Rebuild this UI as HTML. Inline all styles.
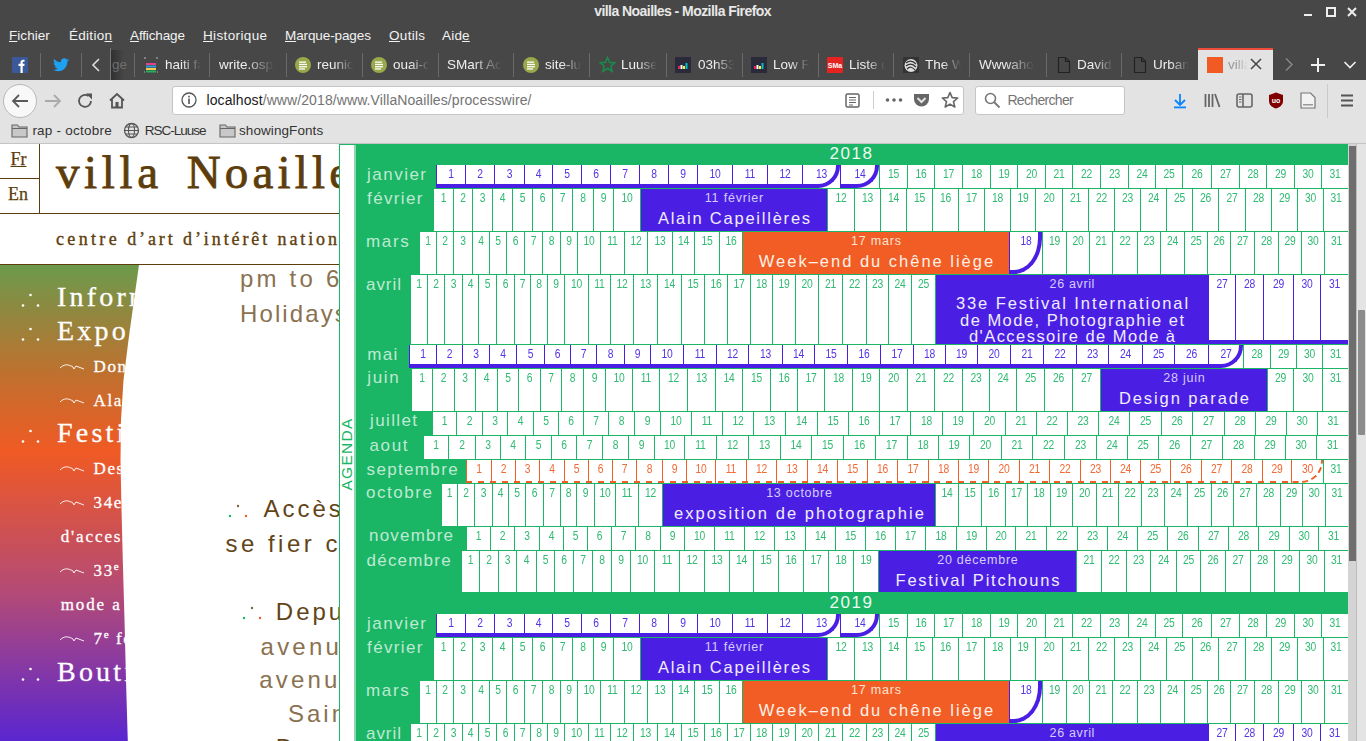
<!DOCTYPE html><html><head><meta charset="utf-8"><title>villa Noailles</title><style>html,body{margin:0;padding:0;}body{width:1366px;height:741px;overflow:hidden;position:relative;background:#fff;font-family:'Liberation Sans',sans-serif;}.t{position:absolute;white-space:nowrap;line-height:1;}.c{position:absolute;background:#fff}.n{position:absolute;text-align:center;font-size:12px;line-height:1;transform:scaleX(0.86);letter-spacing:-0.2px}</style></head><body>
<div style="position:absolute;left:0px;top:0px;width:1366px;height:80px;background:#474747;"></div>
<div class="t" style="left:594.20px;top:3.95px;font-size:14px;font-family:'Liberation Sans',sans-serif;font-weight:bold;color:#e8e8e8;letter-spacing:-0.552px;">villa Noailles - Mozilla Firefox</div>
<svg style="position:absolute;left:1300px;top:5px" width="66" height="14" viewBox="0 0 66 14"><rect x="4" y="9" width="8" height="2" fill="#eee"/><rect x="27" y="3" width="8" height="8" fill="none" stroke="#eee" stroke-width="2"/><path d="M48 3 L56 11 M56 3 L48 11" stroke="#eee" stroke-width="2"/></svg>
<div class="t" style="left:9.00px;top:28.67px;font-size:13.5px;font-family:'Liberation Sans',sans-serif;color:#f2f2f2;letter-spacing:0.049px;"><u>F</u>ichier</div>
<div class="t" style="left:69.00px;top:28.67px;font-size:13.5px;font-family:'Liberation Sans',sans-serif;color:#f2f2f2;letter-spacing:0.287px;">Éditio<u>n</u></div>
<div class="t" style="left:130.00px;top:28.67px;font-size:13.5px;font-family:'Liberation Sans',sans-serif;color:#f2f2f2;letter-spacing:-0.143px;"><u>A</u>ffichage</div>
<div class="t" style="left:203.00px;top:28.67px;font-size:13.5px;font-family:'Liberation Sans',sans-serif;color:#f2f2f2;letter-spacing:0.358px;"><u>H</u>istorique</div>
<div class="t" style="left:285.00px;top:28.67px;font-size:13.5px;font-family:'Liberation Sans',sans-serif;color:#f2f2f2;letter-spacing:-0.105px;"><u>M</u>arque-pages</div>
<div class="t" style="left:389.00px;top:28.67px;font-size:13.5px;font-family:'Liberation Sans',sans-serif;color:#f2f2f2;letter-spacing:0.318px;"><u>O</u>utils</div>
<div class="t" style="left:442.00px;top:28.67px;font-size:13.5px;font-family:'Liberation Sans',sans-serif;color:#f2f2f2;letter-spacing:0.193px;">Aid<u>e</u></div>
<div style="position:absolute;left:40px;top:53px;width:1px;height:24px;background:#6a6a6a;"></div>
<div style="position:absolute;left:81px;top:53px;width:1px;height:24px;background:#6a6a6a;"></div>
<div style="position:absolute;left:110px;top:53px;width:1px;height:24px;background:#6a6a6a;"></div>
<div style="position:absolute;left:134px;top:53px;width:1px;height:24px;background:#6a6a6a;"></div>
<div style="position:absolute;left:209px;top:53px;width:1px;height:24px;background:#6a6a6a;"></div>
<div style="position:absolute;left:286px;top:53px;width:1px;height:24px;background:#6a6a6a;"></div>
<div style="position:absolute;left:362px;top:53px;width:1px;height:24px;background:#6a6a6a;"></div>
<div style="position:absolute;left:438px;top:53px;width:1px;height:24px;background:#6a6a6a;"></div>
<div style="position:absolute;left:513px;top:53px;width:1px;height:24px;background:#6a6a6a;"></div>
<div style="position:absolute;left:589px;top:53px;width:1px;height:24px;background:#6a6a6a;"></div>
<div style="position:absolute;left:666px;top:53px;width:1px;height:24px;background:#6a6a6a;"></div>
<div style="position:absolute;left:742px;top:53px;width:1px;height:24px;background:#6a6a6a;"></div>
<div style="position:absolute;left:818px;top:53px;width:1px;height:24px;background:#6a6a6a;"></div>
<div style="position:absolute;left:893px;top:53px;width:1px;height:24px;background:#6a6a6a;"></div>
<div style="position:absolute;left:969px;top:53px;width:1px;height:24px;background:#6a6a6a;"></div>
<div style="position:absolute;left:1046px;top:53px;width:1px;height:24px;background:#6a6a6a;"></div>
<div style="position:absolute;left:1121px;top:53px;width:1px;height:24px;background:#6a6a6a;"></div>
<svg style="position:absolute;left:12px;top:57px" width="16" height="16"><rect width="16" height="16" rx="1" fill="#3b5998"/><path d="M8.5 16 V9 H6.5 V6.8 H8.5 V5.3 C8.5 3.5 9.5 2.7 11.2 2.7 H12.5 V4.8 H11.5 C10.8 4.8 10.7 5.1 10.7 5.7 V6.8 H12.6 L12.3 9 H10.7 V16 Z" fill="#fff"/></svg>
<svg style="position:absolute;left:53px;top:58px" width="16" height="14" viewBox="0 0 24 20"><path d="M24 2.4c-.9.4-1.8.6-2.8.8 1-.6 1.8-1.6 2.2-2.7-1 .6-2 1-3.1 1.2C19.4.7 18.1 0 16.6 0c-2.7 0-4.9 2.2-4.9 4.9 0 .4 0 .8.1 1.1C7.7 5.8 4.1 3.9 1.7.9c-.4.7-.7 1.6-.7 2.5 0 1.7.9 3.2 2.2 4.1-.8 0-1.6-.2-2.2-.6v.1c0 2.4 1.7 4.4 3.9 4.8-.4.1-.8.2-1.3.2-.3 0-.6 0-.9-.1.6 2 2.4 3.4 4.6 3.4-1.7 1.3-3.8 2.1-6.1 2.1-.4 0-.8 0-1.2-.1 2.2 1.4 4.8 2.2 7.5 2.2 9.1 0 14-7.5 14-14v-.6c1-.7 1.8-1.6 2.5-2.5z" fill="#1da1f2"/></svg>
<svg style="position:absolute;left:91px;top:58px" width="10" height="14"><path d="M8 1 L2 7 L8 13" fill="none" stroke="#ddd" stroke-width="1.6"/></svg>
<div style="position:absolute;left:110px;top:50px;width:14px;height:30px;background:linear-gradient(to right,rgba(0,0,0,0.35),rgba(0,0,0,0));"></div>
<div style="position:absolute;left:110px;top:48px;width:1px;height:32px;background:#777;"></div>
<div class="t" style="left:112px;top:58px;font-size:13.5px;color:#6e6e6e;">ge</div>
<svg style="position:absolute;left:143px;top:57px" width="16" height="16"><rect x="3" y="6" width="10" height="2" fill="#e83e8c"/><rect x="3" y="8.5" width="10" height="2" fill="#2d9cdb"/><rect x="3" y="11" width="10" height="2" fill="#f2c94c"/><rect x="3" y="13.5" width="10" height="2" fill="#27ae60"/><path d="M1 1h2M13 1h2M1 15h1M14 15h1" stroke="#bbb" stroke-width="1"/></svg>
<div class="t" style="left:165px;top:58px;font-size:13.5px;color:#eee;width:38px;overflow:hidden;-webkit-mask-image:linear-gradient(to right,#000 45%,transparent 95%);mask-image:linear-gradient(to right,#000 45%,transparent 95%);">haiti fa</div>
<div class="t" style="left:219px;top:58px;font-size:13.5px;color:#eee;width:58px;overflow:hidden;-webkit-mask-image:linear-gradient(to right,#000 45%,transparent 95%);mask-image:linear-gradient(to right,#000 45%,transparent 95%);">write.osp</div>
<svg style="position:absolute;left:295px;top:57px" width="16" height="16"><circle cx="8" cy="8" r="8" fill="#98a84a"/><rect x="4" y="4.5" width="7" height="1.3" fill="#fff"/><rect x="4" y="6.8" width="8" height="1.3" fill="#fff"/><rect x="4" y="9.1" width="8" height="1.3" fill="#fff"/><rect x="4" y="11.3" width="6" height="1.3" fill="#fff"/></svg>
<div class="t" style="left:317px;top:58px;font-size:13.5px;color:#eee;width:38px;overflow:hidden;-webkit-mask-image:linear-gradient(to right,#000 45%,transparent 95%);mask-image:linear-gradient(to right,#000 45%,transparent 95%);">reunion</div>
<svg style="position:absolute;left:371px;top:57px" width="16" height="16"><circle cx="8" cy="8" r="8" fill="#98a84a"/><rect x="4" y="4.5" width="7" height="1.3" fill="#fff"/><rect x="4" y="6.8" width="8" height="1.3" fill="#fff"/><rect x="4" y="9.1" width="8" height="1.3" fill="#fff"/><rect x="4" y="11.3" width="6" height="1.3" fill="#fff"/></svg>
<div class="t" style="left:393px;top:58px;font-size:13.5px;color:#eee;width:38px;overflow:hidden;-webkit-mask-image:linear-gradient(to right,#000 45%,transparent 95%);mask-image:linear-gradient(to right,#000 45%,transparent 95%);">ouai-c</div>
<div class="t" style="left:447px;top:58px;font-size:13.5px;color:#eee;width:58px;overflow:hidden;-webkit-mask-image:linear-gradient(to right,#000 45%,transparent 95%);mask-image:linear-gradient(to right,#000 45%,transparent 95%);">SMart Acc</div>
<svg style="position:absolute;left:523px;top:57px" width="16" height="16"><circle cx="8" cy="8" r="8" fill="#98a84a"/><rect x="4" y="4.5" width="7" height="1.3" fill="#fff"/><rect x="4" y="6.8" width="8" height="1.3" fill="#fff"/><rect x="4" y="9.1" width="8" height="1.3" fill="#fff"/><rect x="4" y="11.3" width="6" height="1.3" fill="#fff"/></svg>
<div class="t" style="left:545px;top:58px;font-size:13.5px;color:#eee;width:38px;overflow:hidden;-webkit-mask-image:linear-gradient(to right,#000 45%,transparent 95%);mask-image:linear-gradient(to right,#000 45%,transparent 95%);">site-lu</div>
<svg style="position:absolute;left:599px;top:56px" width="17" height="17"><path d="M8.5 1.5 L10.6 6.4 L15.8 6.8 L11.8 10.2 L13.1 15.3 L8.5 12.5 L3.9 15.3 L5.2 10.2 L1.2 6.8 L6.4 6.4 Z" fill="none" stroke="#1a8a4a" stroke-width="1.6"/></svg>
<div class="t" style="left:621px;top:58px;font-size:13.5px;color:#eee;width:38px;overflow:hidden;-webkit-mask-image:linear-gradient(to right,#000 45%,transparent 95%);mask-image:linear-gradient(to right,#000 45%,transparent 95%);">Luuse</div>
<svg style="position:absolute;left:675px;top:57px" width="16" height="16"><rect width="16" height="16" fill="#2a2a3a"/><rect x="3" y="9" width="2" height="3" fill="#e91e63"/><rect x="5.5" y="8" width="2" height="4" fill="#fff"/><rect x="8" y="9" width="2" height="3" fill="#ffeb3b"/><rect x="10.5" y="6" width="2" height="6" fill="#00bcd4"/></svg>
<svg style="position:absolute;left:751px;top:57px" width="16" height="16"><rect width="16" height="16" fill="#2a2a3a"/><rect x="3" y="9" width="2" height="3" fill="#e91e63"/><rect x="5.5" y="8" width="2" height="4" fill="#fff"/><rect x="8" y="9" width="2" height="3" fill="#ffeb3b"/><rect x="10.5" y="6" width="2" height="6" fill="#00bcd4"/></svg>
<div class="t" style="left:698px;top:58px;font-size:13.5px;color:#eee;width:38px;overflow:hidden;-webkit-mask-image:linear-gradient(to right,#000 45%,transparent 95%);mask-image:linear-gradient(to right,#000 45%,transparent 95%);">03h53</div>
<div class="t" style="left:773px;top:58px;font-size:13.5px;color:#eee;width:38px;overflow:hidden;-webkit-mask-image:linear-gradient(to right,#000 45%,transparent 95%);mask-image:linear-gradient(to right,#000 45%,transparent 95%);">Low R</div>
<svg style="position:absolute;left:827px;top:57px" width="16" height="16"><rect width="16" height="16" rx="1" fill="#e52421"/><text x="8" y="11" font-size="7" fill="#fff" text-anchor="middle" font-family="Liberation Sans" font-weight="bold">SMa</text></svg>
<div class="t" style="left:849px;top:58px;font-size:13.5px;color:#eee;width:38px;overflow:hidden;-webkit-mask-image:linear-gradient(to right,#000 45%,transparent 95%);mask-image:linear-gradient(to right,#000 45%,transparent 95%);">Liste d</div>
<svg style="position:absolute;left:903px;top:57px" width="16" height="16"><rect width="16" height="16" fill="#333"/><circle cx="8" cy="8.5" r="6.5" fill="#ddd"/><path d="M3 6 Q8 2 13 7 M3 9 Q8 5 13 10 M4 12 Q8 8 12 13" stroke="#333" stroke-width="1.2" fill="none"/></svg>
<div class="t" style="left:925px;top:58px;font-size:13.5px;color:#eee;width:38px;overflow:hidden;-webkit-mask-image:linear-gradient(to right,#000 45%,transparent 95%);mask-image:linear-gradient(to right,#000 45%,transparent 95%);">The W</div>
<div class="t" style="left:979px;top:58px;font-size:13.5px;color:#eee;width:58px;overflow:hidden;-webkit-mask-image:linear-gradient(to right,#000 45%,transparent 95%);mask-image:linear-gradient(to right,#000 45%,transparent 95%);">Wwwahoo</div>
<svg style="position:absolute;left:1057px;top:56px" width="14" height="18"><path d="M1.5 1.5 H8.5 L12.5 5.5 V16.5 H1.5 Z M8.5 1.5 V5.5 H12.5" fill="none" stroke="#222" stroke-width="1.2"/></svg>
<svg style="position:absolute;left:1133px;top:56px" width="14" height="18"><path d="M1.5 1.5 H8.5 L12.5 5.5 V16.5 H1.5 Z M8.5 1.5 V5.5 H12.5" fill="none" stroke="#222" stroke-width="1.2"/></svg>
<div class="t" style="left:1077px;top:58px;font-size:13.5px;color:#eee;width:38px;overflow:hidden;-webkit-mask-image:linear-gradient(to right,#000 45%,transparent 95%);mask-image:linear-gradient(to right,#000 45%,transparent 95%);">David</div>
<div class="t" style="left:1153px;top:58px;font-size:13.5px;color:#eee;width:38px;overflow:hidden;-webkit-mask-image:linear-gradient(to right,#000 45%,transparent 95%);mask-image:linear-gradient(to right,#000 45%,transparent 95%);">Urban</div>
<div style="position:absolute;left:1198px;top:49px;width:75px;height:31px;background:#e3e3e3;"></div>
<div style="position:absolute;left:1198px;top:48px;width:75px;height:2px;background:#f04c3c;"></div>
<div style="position:absolute;left:1207px;top:57px;width:16px;height:16px;background:#f15a22;"></div>
<div class="t" style="left:1228px;top:58px;font-size:13.5px;color:#999;width:20px;overflow:hidden;-webkit-mask-image:linear-gradient(to right,#000 40%,transparent 100%);">villa</div>
<svg style="position:absolute;left:1250px;top:58px" width="12" height="12"><path d="M1 1 L11 11 M11 1 L1 11" stroke="#444" stroke-width="1.5"/></svg>
<svg style="position:absolute;left:1284px;top:57px" width="10" height="15"><path d="M2 1.5 L8 7.5 L2 13.5" fill="none" stroke="#888" stroke-width="1.5"/></svg>
<svg style="position:absolute;left:1310px;top:57px" width="16" height="16"><path d="M8 1 V15 M1 8 H15" stroke="#f0f0f0" stroke-width="2"/></svg>
<svg style="position:absolute;left:1343px;top:60px" width="14" height="10"><path d="M1.5 2 L7 7.5 L12.5 2" fill="none" stroke="#f0f0f0" stroke-width="1.6"/></svg>
<div style="position:absolute;left:0px;top:80px;width:1366px;height:63px;background:#e3e3e3;"></div>
<div style="position:absolute;left:0px;top:143px;width:1366px;height:1px;background:#c4c4c4;"></div>
<div style="position:absolute;left:3px;top:84px;width:32px;height:32px;border-radius:50%;border:1px solid #b8b8b8;background:#f8f8f8;"></div>
<svg style="position:absolute;left:11px;top:93px" width="18" height="16"><path d="M17 8 H2 M8 2 L2 8 L8 14" fill="none" stroke="#5a5a5a" stroke-width="1.8"/></svg>
<svg style="position:absolute;left:44px;top:93px" width="18" height="16"><path d="M1 8 H16 M10 2 L16 8 L10 14" fill="none" stroke="#aaa" stroke-width="1.8"/></svg>
<svg style="position:absolute;left:77px;top:92px" width="17" height="17"><path d="M14 9 A6 6 0 1 1 11.5 4" fill="none" stroke="#555" stroke-width="1.8"/><path d="M9 1.5 H15 V7.5 Z" fill="#555"/></svg>
<svg style="position:absolute;left:108px;top:92px" width="18" height="17"><path d="M2 8.5 L9 2 L16 8.5 M4 7 V15.5 H14 V7" fill="none" stroke="#555" stroke-width="1.8"/><rect x="7.5" y="10" width="3" height="5.5" fill="#555"/></svg>
<div style="position:absolute;left:172px;top:86px;width:790px;height:27px;background:#fff;border:1px solid #c6c6c6;border-radius:3px;"></div>
<svg style="position:absolute;left:181px;top:92px" width="16" height="16"><circle cx="8" cy="8" r="7" fill="none" stroke="#555" stroke-width="1.3"/><rect x="7.2" y="6.5" width="1.6" height="5.5" fill="#555"/><rect x="7.2" y="3.8" width="1.6" height="1.6" fill="#555"/></svg>
<div class="t" style="left:206.50px;top:93.35px;font-size:14px;font-family:'Liberation Sans',sans-serif;color:#1a1a1a;letter-spacing:0.097px;">localhost<span style="color:#737373">/www/2018/www.VillaNoailles/processwire/</span></div>
<svg style="position:absolute;left:845px;top:93px" width="15" height="15"><rect x="1" y="1" width="13" height="13" rx="1.5" fill="none" stroke="#666" stroke-width="1.5"/><path d="M4 4.5H11M4 7H11M4 9.5H11M4 12H8" stroke="#666" stroke-width="1"/></svg>
<div style="position:absolute;left:873px;top:91px;width:1px;height:18px;background:#ccc;"></div>
<svg style="position:absolute;left:885px;top:97px" width="18" height="6"><circle cx="2.5" cy="3" r="1.8" fill="#666"/><circle cx="9" cy="3" r="1.8" fill="#666"/><circle cx="15.5" cy="3" r="1.8" fill="#666"/></svg>
<svg style="position:absolute;left:913px;top:92px" width="17" height="16"><path d="M1 2 H16 V7 A7.5 7.5 0 0 1 1 7 Z" fill="#666"/><path d="M4.5 6 L8.5 10 L12.5 6" fill="none" stroke="#e3e3e3" stroke-width="2"/></svg>
<svg style="position:absolute;left:941px;top:91px" width="18" height="18"><path d="M9 1.5 L11.2 6.6 L16.7 7 L12.5 10.6 L13.8 16 L9 13.1 L4.2 16 L5.5 10.6 L1.3 7 L6.8 6.6 Z" fill="none" stroke="#666" stroke-width="1.6" stroke-linejoin="round"/></svg>
<div style="position:absolute;left:975px;top:86px;width:148px;height:27px;background:#fff;border:1px solid #c6c6c6;border-radius:3px;"></div>
<svg style="position:absolute;left:984px;top:92px" width="17" height="17"><circle cx="6.5" cy="6.5" r="5" fill="none" stroke="#777" stroke-width="1.6"/><path d="M10 10 L15.5 15.5" stroke="#777" stroke-width="1.8"/></svg>
<div class="t" style="left:1007.40px;top:93.35px;font-size:14px;font-family:'Liberation Sans',sans-serif;color:#757575;letter-spacing:-0.674px;">Rechercher</div>
<svg style="position:absolute;left:1173px;top:93px" width="14" height="16"><path d="M7 1 V12 M2 7 L7 12 L12 7" fill="none" stroke="#0a84ff" stroke-width="1.8"/><rect x="1" y="13.5" width="12" height="1.8" fill="#0a84ff"/></svg>
<svg style="position:absolute;left:1204px;top:93px" width="17" height="15"><path d="M1.5 1 V14 M5 1 V14 M8.5 1 V14 M11 1 L15.5 14" stroke="#666" stroke-width="1.8"/></svg>
<svg style="position:absolute;left:1236px;top:93px" width="17" height="15"><rect x="1" y="1" width="15" height="13" rx="2" fill="none" stroke="#666" stroke-width="1.6"/><path d="M7 1 V14" stroke="#666" stroke-width="1.6"/><path d="M3 4H5.5M3 6.5H5.5M3 9H5.5" stroke="#666" stroke-width="1"/></svg>
<svg style="position:absolute;left:1268px;top:92px" width="16" height="17"><path d="M8 0.5 L15 3 V9 C15 13 11.5 15.5 8 16.5 C4.5 15.5 1 13 1 9 V3 Z" fill="#800000"/><text x="8" y="11" font-size="7" fill="#fff" text-anchor="middle" font-family="Liberation Sans" font-weight="bold">uo</text></svg>
<svg style="position:absolute;left:1300px;top:92px" width="16" height="17"><path d="M1 1 H10.5 L15 5.5 V16 H1 Z" fill="#f2f2f2" stroke="#777" stroke-width="1.2"/><rect x="3" y="12" width="10" height="1.5" fill="#999"/></svg>
<div style="position:absolute;left:1327px;top:84px;width:1px;height:34px;background:#cacaca;"></div>
<svg style="position:absolute;left:1340px;top:94px" width="14" height="13"><path d="M1 1.5H13M1 6.5H13M1 11.5H13" stroke="#555" stroke-width="1.8"/></svg>
<svg style="position:absolute;left:11px;top:123px" width="17" height="15"><path d="M1 2 H6.5 L8 4 H16 V14 H1 Z" fill="#c8c8c8" stroke="#666" stroke-width="1.1"/><path d="M1 5.5 H16" stroke="#666" stroke-width="1"/></svg>
<div class="t" style="left:32.40px;top:123.57px;font-size:13.5px;font-family:'Liberation Sans',sans-serif;color:#333;letter-spacing:0.230px;">rap - octobre</div>
<svg style="position:absolute;left:123px;top:122px" width="17" height="17"><circle cx="8.5" cy="8.5" r="7" fill="none" stroke="#555" stroke-width="1.3"/><ellipse cx="8.5" cy="8.5" rx="3" ry="7" fill="none" stroke="#555" stroke-width="1.1"/><path d="M1.5 8.5H15.5M2.5 5H14.5M2.5 12H14.5" stroke="#555" stroke-width="1"/></svg>
<div class="t" style="left:144.70px;top:123.57px;font-size:13.5px;font-family:'Liberation Sans',sans-serif;color:#333;letter-spacing:-0.998px;">RSC-Luuse</div>
<svg style="position:absolute;left:219px;top:123px" width="17" height="15"><path d="M1 2 H6.5 L8 4 H16 V14 H1 Z" fill="#c8c8c8" stroke="#666" stroke-width="1.1"/><path d="M1 5.5 H16" stroke="#666" stroke-width="1"/></svg>
<div class="t" style="left:239.00px;top:123.57px;font-size:13.5px;font-family:'Liberation Sans',sans-serif;color:#333;letter-spacing:0.082px;">showingFonts</div>
<div style="position:absolute;left:0px;top:144px;width:1348px;height:597px;background:#fff;"></div>
<div style="position:absolute;left:39px;top:144px;width:1px;height:69px;background:#5e3d0c;"></div>
<div style="position:absolute;left:0px;top:178px;width:39px;height:1px;background:#5e3d0c;"></div>
<div style="position:absolute;left:0px;top:213px;width:340px;height:1px;background:#5e3d0c;"></div>
<div style="position:absolute;left:0px;top:264px;width:340px;height:1px;background:#5e3d0c;"></div>
<div class="t" style="left:10.50px;top:150.33px;font-size:18px;font-family:'Liberation Serif',serif;color:#5e3d0c;letter-spacing:0.000px;text-decoration:underline;text-underline-offset:1px;-webkit-text-stroke:0.25px #5e3d0c;">Fr</div>
<div class="t" style="left:8.00px;top:184.53px;font-size:18px;font-family:'Liberation Serif',serif;color:#5e3d0c;letter-spacing:0.000px;-webkit-text-stroke:0.25px #5e3d0c;">En</div>
<div class="t" style="left:56.00px;top:149.44px;font-size:47px;font-family:'Liberation Serif',serif;color:#5e3d0c;letter-spacing:4.617px;-webkit-text-stroke:0.8px #5e3d0c;">villa</div>
<div class="t" style="left:186.70px;top:149.44px;font-size:47px;font-family:'Liberation Serif',serif;color:#5e3d0c;letter-spacing:4.200px;-webkit-text-stroke:0.8px #5e3d0c;">Noailles</div>
<div class="t" style="left:56.00px;top:229.83px;font-size:18px;font-family:'Liberation Serif',serif;color:#5e3d0c;letter-spacing:3.348px;-webkit-text-stroke:0.35px #5e3d0c;">centre</div>
<div class="t" style="left:127.20px;top:229.83px;font-size:18px;font-family:'Liberation Serif',serif;color:#5e3d0c;letter-spacing:2.898px;-webkit-text-stroke:0.35px #5e3d0c;">d’art d’intérêt national</div>
<div style="position:absolute;left:0;top:265px;width:340px;height:476px;overflow:hidden;clip-path:polygon(0px 0px,139px 0px,134px 35px,128.5px 75px,123.5px 115px,121px 155px,120.5px 195px,121.3px 235px,122.8px 295px,124.5px 355px,126px 415px,127.8px 476px,0px 476px);background:linear-gradient(to bottom,#6c9a4c 0px,#c0702e 110px,#f05a24 186px,#b24a78 330px,#5a26d0 476px);">
<svg style="position:absolute;left:21px;top:24.69999999999999px" width="20" height="18"><circle cx="2" cy="15.5" r="1.3" fill="#fff"/><circle cx="9.5" cy="5" r="1.3" fill="#fff"/><circle cx="17" cy="15.5" r="1.3" fill="#fff"/></svg>
<div class="t" style="left:57px;top:18.25px;font-size:28px;font-family:'Liberation Serif',serif;color:#fff;letter-spacing:3.2px;-webkit-text-stroke:0.3px #fff;">Informations</div>
<svg style="position:absolute;left:21px;top:58.5px" width="20" height="18"><circle cx="2" cy="15.5" r="1.3" fill="#fff"/><circle cx="9.5" cy="5" r="1.3" fill="#fff"/><circle cx="17" cy="15.5" r="1.3" fill="#fff"/></svg>
<div class="t" style="left:57px;top:52.05px;font-size:28px;font-family:'Liberation Serif',serif;color:#fff;letter-spacing:3.2px;-webkit-text-stroke:0.3px #fff;">Expositions</div>
<svg style="position:absolute;left:21px;top:160.60000000000002px" width="20" height="18"><circle cx="2" cy="15.5" r="1.3" fill="#fff"/><circle cx="9.5" cy="5" r="1.3" fill="#fff"/><circle cx="17" cy="15.5" r="1.3" fill="#fff"/></svg>
<div class="t" style="left:57px;top:154.15px;font-size:28px;font-family:'Liberation Serif',serif;color:#fff;letter-spacing:3.2px;-webkit-text-stroke:0.3px #fff;">Festivals</div>
<svg style="position:absolute;left:21px;top:399px" width="20" height="18"><circle cx="2" cy="15.5" r="1.3" fill="#fff"/><circle cx="9.5" cy="5" r="1.3" fill="#fff"/><circle cx="17" cy="15.5" r="1.3" fill="#fff"/></svg>
<div class="t" style="left:57px;top:392.55px;font-size:28px;font-family:'Liberation Serif',serif;color:#fff;letter-spacing:3.2px;-webkit-text-stroke:0.3px #fff;">Boutique</div>
<svg style="position:absolute;left:59px;top:97px" width="26" height="10"><path d="M1 6 C5 2 9 2 14 5 L15 7 L17 4 L25 7" fill="none" stroke="#fff" stroke-width="0.9"/></svg>
<div class="t" style="left:93.6px;top:92.76px;font-size:17px;font-family:'Liberation Serif',serif;color:#fff;letter-spacing:1.6px;-webkit-text-stroke:0.3px #fff;">Donation Pierre</div>
<svg style="position:absolute;left:59px;top:131px" width="26" height="10"><path d="M1 6 C5 2 9 2 14 5 L15 7 L17 4 L25 7" fill="none" stroke="#fff" stroke-width="0.9"/></svg>
<div class="t" style="left:93.6px;top:126.76px;font-size:17px;font-family:'Liberation Serif',serif;color:#fff;letter-spacing:1.6px;-webkit-text-stroke:0.3px #fff;">Alain Capeillères</div>
<svg style="position:absolute;left:59px;top:199.3px" width="26" height="10"><path d="M1 6 C5 2 9 2 14 5 L15 7 L17 4 L25 7" fill="none" stroke="#fff" stroke-width="0.9"/></svg>
<div class="t" style="left:93.6px;top:195.06px;font-size:17px;font-family:'Liberation Serif',serif;color:#fff;letter-spacing:1.6px;-webkit-text-stroke:0.3px #fff;">Design parade</div>
<svg style="position:absolute;left:59px;top:233px" width="26" height="10"><path d="M1 6 C5 2 9 2 14 5 L15 7 L17 4 L25 7" fill="none" stroke="#fff" stroke-width="0.9"/></svg>
<div class="t" style="left:93.6px;top:228.76px;font-size:17px;font-family:'Liberation Serif',serif;color:#fff;letter-spacing:1.6px;-webkit-text-stroke:0.3px #fff;">34e festival international</div>
<svg style="position:absolute;left:59px;top:300.79999999999995px" width="26" height="10"><path d="M1 6 C5 2 9 2 14 5 L15 7 L17 4 L25 7" fill="none" stroke="#fff" stroke-width="0.9"/></svg>
<div class="t" style="left:93.6px;top:296.56px;font-size:17px;font-family:'Liberation Serif',serif;color:#fff;letter-spacing:1.6px;-webkit-text-stroke:0.3px #fff;">33<sup style="font-size:11px;vertical-align:6px;line-height:0">e</sup> festival</div>
<svg style="position:absolute;left:59px;top:369px" width="26" height="10"><path d="M1 6 C5 2 9 2 14 5 L15 7 L17 4 L25 7" fill="none" stroke="#fff" stroke-width="0.9"/></svg>
<div class="t" style="left:93.6px;top:364.76px;font-size:17px;font-family:'Liberation Serif',serif;color:#fff;letter-spacing:1.6px;-webkit-text-stroke:0.3px #fff;">7<sup style="font-size:11px;vertical-align:6px;line-height:0">e</sup> festival</div>
<div class="t" style="left:60.7px;top:262.56px;font-size:17px;font-family:'Liberation Serif',serif;color:#fff;letter-spacing:1.9px;-webkit-text-stroke:0.3px #fff;">d'accessoires</div>
<div class="t" style="left:60.7px;top:330.76px;font-size:17px;font-family:'Liberation Serif',serif;color:#fff;letter-spacing:1.9px;-webkit-text-stroke:0.3px #fff;">mode a</div>
</div>
<div style="position:absolute;left:140px;top:265px;width:199px;height:476px;overflow:hidden;">
<div class="t" style="left:100.00px;top:2.48px;font-size:24px;font-family:'Liberation Sans',sans-serif;color:#8a7150;letter-spacing:3.2px;">pm to 6 pm</div>
<div class="t" style="left:100.00px;top:36.68px;font-size:24px;font-family:'Liberation Sans',sans-serif;color:#8a7150;letter-spacing:2.1px;">Holidays</div>
<svg style="position:absolute;left:88px;top:235.70000000000005px" width="20" height="18"><circle cx="2" cy="15" r="1.2" fill="#1ab665"/><circle cx="10" cy="5" r="1.2" fill="#7d6240"/><circle cx="18" cy="15" r="1.2" fill="#f15d24"/></svg>
<div class="t" style="left:123.40px;top:232.38px;font-size:24px;font-family:'Liberation Sans',sans-serif;color:#634418;letter-spacing:3.0px;">Accès</div>
<div class="t" style="left:85.40px;top:266.88px;font-size:24px;font-family:'Liberation Sans',sans-serif;color:#634418;letter-spacing:3.5px;">se fier c</div>
<svg style="position:absolute;left:101.6px;top:338px" width="20" height="18"><circle cx="2" cy="15" r="1.2" fill="#1ab665"/><circle cx="10" cy="5" r="1.2" fill="#7d6240"/><circle cx="18" cy="15" r="1.2" fill="#f15d24"/></svg>
<div class="t" style="left:135.80px;top:334.68px;font-size:24px;font-family:'Liberation Sans',sans-serif;color:#634418;letter-spacing:3.0px;">Depuis</div>
<div class="t" style="left:120.60px;top:369.68px;font-size:24px;font-family:'Liberation Sans',sans-serif;color:#8a7150;letter-spacing:3.2px;">avenue</div>
<div class="t" style="left:119.20px;top:402.68px;font-size:24px;font-family:'Liberation Sans',sans-serif;color:#8a7150;letter-spacing:3.2px;">avenue</div>
<div class="t" style="left:148.00px;top:437.18px;font-size:24px;font-family:'Liberation Sans',sans-serif;color:#8a7150;letter-spacing:3.0px;">Saint</div>
<svg style="position:absolute;left:101.6px;top:474px" width="20" height="18"><circle cx="2" cy="15" r="1.2" fill="#1ab665"/><circle cx="10" cy="5" r="1.2" fill="#7d6240"/><circle cx="18" cy="15" r="1.2" fill="#f15d24"/></svg>
<div class="t" style="left:135.80px;top:470.68px;font-size:24px;font-family:'Liberation Sans',sans-serif;color:#634418;letter-spacing:3.0px;">Depuis</div>
</div>
<div style="position:absolute;left:339px;top:144px;width:1px;height:597px;background:#1ab665;"></div>
<div style="position:absolute;left:340px;top:144px;width:14px;height:597px;background:#fff;"></div>
<div style="position:absolute;left:354px;top:144px;width:2px;height:597px;background:#8cd9b0;"></div>
<div style="position:absolute;left:356px;top:144px;width:992px;height:597px;background:#1ab665;"></div>
<div style="position:absolute;left:339px;top:144px;width:1009px;height:1px;background:#1ab665;"></div>
<div class="t" style="left:307px;top:446px;width:80px;height:16px;text-align:center;font-size:15.5px;color:#1ab665;letter-spacing:1.25px;transform:rotate(-90deg);transform-origin:40px 8px;line-height:16px;">AGENDA</div>
<div class="t" style="left:355px;width:993px;text-align:center;top:144.91px;font-size:17px;color:#eefaf2;letter-spacing:1.6px;">2018</div>
<div class="t" style="left:367.00px;top:165.61px;font-size:17px;font-family:'Liberation Sans',sans-serif;color:rgba(255,255,255,0.72);letter-spacing:1.487px;">janvier</div>
<div class="c" style="left:437px;top:165px;width:28px;height:23px"></div>
<div class="c" style="left:436px;top:165px;width:1px;height:23px;background:#4b1fe3"></div>
<div class="n" style="left:437px;top:168.0px;width:28px;color:#5533e6">1</div>
<div class="c" style="left:466px;top:165px;width:28px;height:23px"></div>
<div class="c" style="left:465px;top:165px;width:1px;height:23px;background:#4b1fe3"></div>
<div class="n" style="left:466px;top:168.0px;width:28px;color:#5533e6">2</div>
<div class="c" style="left:495px;top:165px;width:29px;height:23px"></div>
<div class="c" style="left:494px;top:165px;width:1px;height:23px;background:#4b1fe3"></div>
<div class="n" style="left:495px;top:168.0px;width:29px;color:#5533e6">3</div>
<div class="c" style="left:525px;top:165px;width:27px;height:23px"></div>
<div class="c" style="left:524px;top:165px;width:1px;height:23px;background:#4b1fe3"></div>
<div class="n" style="left:525px;top:168.0px;width:27px;color:#5533e6">4</div>
<div class="c" style="left:553px;top:165px;width:28px;height:23px"></div>
<div class="c" style="left:552px;top:165px;width:1px;height:23px;background:#4b1fe3"></div>
<div class="n" style="left:553px;top:168.0px;width:28px;color:#5533e6">5</div>
<div class="c" style="left:582px;top:165px;width:28px;height:23px"></div>
<div class="c" style="left:581px;top:165px;width:1px;height:23px;background:#4b1fe3"></div>
<div class="n" style="left:582px;top:168.0px;width:28px;color:#5533e6">6</div>
<div class="c" style="left:611px;top:165px;width:28px;height:23px"></div>
<div class="c" style="left:610px;top:165px;width:1px;height:23px;background:#4b1fe3"></div>
<div class="n" style="left:611px;top:168.0px;width:28px;color:#5533e6">7</div>
<div class="c" style="left:640px;top:165px;width:28px;height:23px"></div>
<div class="c" style="left:639px;top:165px;width:1px;height:23px;background:#4b1fe3"></div>
<div class="n" style="left:640px;top:168.0px;width:28px;color:#5533e6">8</div>
<div class="c" style="left:669px;top:165px;width:28px;height:23px"></div>
<div class="c" style="left:668px;top:165px;width:1px;height:23px;background:#4b1fe3"></div>
<div class="n" style="left:669px;top:168.0px;width:28px;color:#5533e6">9</div>
<div class="c" style="left:698px;top:165px;width:34px;height:23px"></div>
<div class="c" style="left:697px;top:165px;width:1px;height:23px;background:#4b1fe3"></div>
<div class="n" style="left:698px;top:168.0px;width:34px;color:#5533e6">10</div>
<div class="c" style="left:733px;top:165px;width:34px;height:23px"></div>
<div class="c" style="left:732px;top:165px;width:1px;height:23px;background:#4b1fe3"></div>
<div class="n" style="left:733px;top:168.0px;width:34px;color:#5533e6">11</div>
<div class="c" style="left:768px;top:165px;width:34px;height:23px"></div>
<div class="c" style="left:767px;top:165px;width:1px;height:23px;background:#4b1fe3"></div>
<div class="n" style="left:768px;top:168.0px;width:34px;color:#5533e6">12</div>
<div class="c" style="left:803px;top:165px;width:37px;height:23px"></div>
<div class="c" style="left:802px;top:165px;width:1px;height:23px;background:#4b1fe3"></div>
<div class="n" style="left:803px;top:168.0px;width:37px;color:#5533e6">13</div>
<div class="c" style="left:841px;top:165px;width:38px;height:23px"></div>
<div class="c" style="left:840px;top:165px;width:1px;height:23px;background:#4b1fe3"></div>
<div class="n" style="left:841px;top:168.0px;width:38px;color:#5533e6">14</div>
<div class="c" style="left:880px;top:165px;width:27px;height:23px"></div>
<div class="n" style="left:880px;top:168.0px;width:27px;color:#2fbb72">15</div>
<div class="c" style="left:908px;top:165px;width:26px;height:23px"></div>
<div class="n" style="left:908px;top:168.0px;width:26px;color:#2fbb72">16</div>
<div class="c" style="left:935px;top:165px;width:27px;height:23px"></div>
<div class="n" style="left:935px;top:168.0px;width:27px;color:#2fbb72">17</div>
<div class="c" style="left:963px;top:165px;width:27px;height:23px"></div>
<div class="n" style="left:963px;top:168.0px;width:27px;color:#2fbb72">18</div>
<div class="c" style="left:991px;top:165px;width:26px;height:23px"></div>
<div class="n" style="left:991px;top:168.0px;width:26px;color:#2fbb72">19</div>
<div class="c" style="left:1018px;top:165px;width:27px;height:23px"></div>
<div class="n" style="left:1018px;top:168.0px;width:27px;color:#2fbb72">20</div>
<div class="c" style="left:1046px;top:165px;width:26px;height:23px"></div>
<div class="n" style="left:1046px;top:168.0px;width:26px;color:#2fbb72">21</div>
<div class="c" style="left:1073px;top:165px;width:27px;height:23px"></div>
<div class="n" style="left:1073px;top:168.0px;width:27px;color:#2fbb72">22</div>
<div class="c" style="left:1101px;top:165px;width:27px;height:23px"></div>
<div class="n" style="left:1101px;top:168.0px;width:27px;color:#2fbb72">23</div>
<div class="c" style="left:1129px;top:165px;width:26px;height:23px"></div>
<div class="n" style="left:1129px;top:168.0px;width:26px;color:#2fbb72">24</div>
<div class="c" style="left:1156px;top:165px;width:26px;height:23px"></div>
<div class="n" style="left:1156px;top:168.0px;width:26px;color:#2fbb72">25</div>
<div class="c" style="left:1183px;top:165px;width:28px;height:23px"></div>
<div class="n" style="left:1183px;top:168.0px;width:28px;color:#2fbb72">26</div>
<div class="c" style="left:1212px;top:165px;width:27px;height:23px"></div>
<div class="n" style="left:1212px;top:168.0px;width:27px;color:#2fbb72">27</div>
<div class="c" style="left:1240px;top:165px;width:26px;height:23px"></div>
<div class="n" style="left:1240px;top:168.0px;width:26px;color:#2fbb72">28</div>
<div class="c" style="left:1267px;top:165px;width:27px;height:23px"></div>
<div class="n" style="left:1267px;top:168.0px;width:27px;color:#2fbb72">29</div>
<div class="c" style="left:1295px;top:165px;width:26px;height:23px"></div>
<div class="n" style="left:1295px;top:168.0px;width:26px;color:#2fbb72">30</div>
<div class="c" style="left:1322px;top:165px;width:26px;height:23px"></div>
<div class="n" style="left:1322px;top:168.0px;width:26px;color:#2fbb72">31</div>
<div class="t" style="left:367.10px;top:189.81px;font-size:17px;font-family:'Liberation Sans',sans-serif;color:rgba(255,255,255,0.72);letter-spacing:1.344px;">février</div>
<div class="c" style="left:434px;top:189px;width:19px;height:42px"></div>
<div class="n" style="left:434px;top:192.0px;width:19px;color:#2fbb72">1</div>
<div class="c" style="left:454px;top:189px;width:18px;height:42px"></div>
<div class="n" style="left:454px;top:192.0px;width:18px;color:#2fbb72">2</div>
<div class="c" style="left:473px;top:189px;width:19px;height:42px"></div>
<div class="n" style="left:473px;top:192.0px;width:19px;color:#2fbb72">3</div>
<div class="c" style="left:493px;top:189px;width:19px;height:42px"></div>
<div class="n" style="left:493px;top:192.0px;width:19px;color:#2fbb72">4</div>
<div class="c" style="left:513px;top:189px;width:19px;height:42px"></div>
<div class="n" style="left:513px;top:192.0px;width:19px;color:#2fbb72">5</div>
<div class="c" style="left:533px;top:189px;width:19px;height:42px"></div>
<div class="n" style="left:533px;top:192.0px;width:19px;color:#2fbb72">6</div>
<div class="c" style="left:553px;top:189px;width:19px;height:42px"></div>
<div class="n" style="left:553px;top:192.0px;width:19px;color:#2fbb72">7</div>
<div class="c" style="left:573px;top:189px;width:20px;height:42px"></div>
<div class="n" style="left:573px;top:192.0px;width:20px;color:#2fbb72">8</div>
<div class="c" style="left:594px;top:189px;width:19px;height:42px"></div>
<div class="n" style="left:594px;top:192.0px;width:19px;color:#2fbb72">9</div>
<div class="c" style="left:614px;top:189px;width:26px;height:42px"></div>
<div class="n" style="left:614px;top:192.0px;width:26px;color:#2fbb72">10</div>
<div style="position:absolute;left:641px;top:189px;width:186px;height:42px;background:#4b1fe3;"></div>
<div class="c" style="left:828px;top:189px;width:26px;height:42px"></div>
<div class="n" style="left:828px;top:192.0px;width:26px;color:#2fbb72">12</div>
<div class="c" style="left:855px;top:189px;width:25px;height:42px"></div>
<div class="n" style="left:855px;top:192.0px;width:25px;color:#2fbb72">13</div>
<div class="c" style="left:881px;top:189px;width:25px;height:42px"></div>
<div class="n" style="left:881px;top:192.0px;width:25px;color:#2fbb72">14</div>
<div class="c" style="left:907px;top:189px;width:25px;height:42px"></div>
<div class="n" style="left:907px;top:192.0px;width:25px;color:#2fbb72">15</div>
<div class="c" style="left:933px;top:189px;width:25px;height:42px"></div>
<div class="n" style="left:933px;top:192.0px;width:25px;color:#2fbb72">16</div>
<div class="c" style="left:959px;top:189px;width:25px;height:42px"></div>
<div class="n" style="left:959px;top:192.0px;width:25px;color:#2fbb72">17</div>
<div class="c" style="left:985px;top:189px;width:25px;height:42px"></div>
<div class="n" style="left:985px;top:192.0px;width:25px;color:#2fbb72">18</div>
<div class="c" style="left:1011px;top:189px;width:24px;height:42px"></div>
<div class="n" style="left:1011px;top:192.0px;width:24px;color:#2fbb72">19</div>
<div class="c" style="left:1036px;top:189px;width:26px;height:42px"></div>
<div class="n" style="left:1036px;top:192.0px;width:26px;color:#2fbb72">20</div>
<div class="c" style="left:1063px;top:189px;width:25px;height:42px"></div>
<div class="n" style="left:1063px;top:192.0px;width:25px;color:#2fbb72">21</div>
<div class="c" style="left:1089px;top:189px;width:25px;height:42px"></div>
<div class="n" style="left:1089px;top:192.0px;width:25px;color:#2fbb72">22</div>
<div class="c" style="left:1115px;top:189px;width:25px;height:42px"></div>
<div class="n" style="left:1115px;top:192.0px;width:25px;color:#2fbb72">23</div>
<div class="c" style="left:1141px;top:189px;width:25px;height:42px"></div>
<div class="n" style="left:1141px;top:192.0px;width:25px;color:#2fbb72">24</div>
<div class="c" style="left:1167px;top:189px;width:25px;height:42px"></div>
<div class="n" style="left:1167px;top:192.0px;width:25px;color:#2fbb72">25</div>
<div class="c" style="left:1193px;top:189px;width:25px;height:42px"></div>
<div class="n" style="left:1193px;top:192.0px;width:25px;color:#2fbb72">26</div>
<div class="c" style="left:1219px;top:189px;width:26px;height:42px"></div>
<div class="n" style="left:1219px;top:192.0px;width:26px;color:#2fbb72">27</div>
<div class="c" style="left:1246px;top:189px;width:25px;height:42px"></div>
<div class="n" style="left:1246px;top:192.0px;width:25px;color:#2fbb72">28</div>
<div class="c" style="left:1272px;top:189px;width:25px;height:42px"></div>
<div class="n" style="left:1272px;top:192.0px;width:25px;color:#2fbb72">29</div>
<div class="c" style="left:1298px;top:189px;width:25px;height:42px"></div>
<div class="n" style="left:1298px;top:192.0px;width:25px;color:#2fbb72">30</div>
<div class="c" style="left:1324px;top:189px;width:24px;height:42px"></div>
<div class="n" style="left:1324px;top:192.0px;width:24px;color:#2fbb72">31</div>
<div class="t" style="left:704.80px;top:191.82px;font-size:12.5px;font-family:'Liberation Sans',sans-serif;color:#d4ccff;letter-spacing:0.802px;">11 février</div>
<div class="t" style="left:657.90px;top:209.63px;font-size:16.5px;font-family:'Liberation Sans',sans-serif;color:#f0edff;letter-spacing:1.774px;">Alain Capeillères</div>
<div class="t" style="left:366.00px;top:233.21px;font-size:17px;font-family:'Liberation Sans',sans-serif;color:rgba(255,255,255,0.72);letter-spacing:1.674px;">mars</div>
<div class="c" style="left:420px;top:232px;width:16px;height:42px"></div>
<div class="n" style="left:420px;top:235.0px;width:16px;color:#2fbb72">1</div>
<div class="c" style="left:437px;top:232px;width:16px;height:42px"></div>
<div class="n" style="left:437px;top:235.0px;width:16px;color:#2fbb72">2</div>
<div class="c" style="left:454px;top:232px;width:18px;height:42px"></div>
<div class="n" style="left:454px;top:235.0px;width:18px;color:#2fbb72">3</div>
<div class="c" style="left:473px;top:232px;width:16px;height:42px"></div>
<div class="n" style="left:473px;top:235.0px;width:16px;color:#2fbb72">4</div>
<div class="c" style="left:490px;top:232px;width:16px;height:42px"></div>
<div class="n" style="left:490px;top:235.0px;width:16px;color:#2fbb72">5</div>
<div class="c" style="left:507px;top:232px;width:17px;height:42px"></div>
<div class="n" style="left:507px;top:235.0px;width:17px;color:#2fbb72">6</div>
<div class="c" style="left:525px;top:232px;width:17px;height:42px"></div>
<div class="n" style="left:525px;top:235.0px;width:17px;color:#2fbb72">7</div>
<div class="c" style="left:543px;top:232px;width:17px;height:42px"></div>
<div class="n" style="left:543px;top:235.0px;width:17px;color:#2fbb72">8</div>
<div class="c" style="left:561px;top:232px;width:16px;height:42px"></div>
<div class="n" style="left:561px;top:235.0px;width:16px;color:#2fbb72">9</div>
<div class="c" style="left:578px;top:232px;width:22px;height:42px"></div>
<div class="n" style="left:578px;top:235.0px;width:22px;color:#2fbb72">10</div>
<div class="c" style="left:601px;top:232px;width:23px;height:42px"></div>
<div class="n" style="left:601px;top:235.0px;width:23px;color:#2fbb72">11</div>
<div class="c" style="left:625px;top:232px;width:22px;height:42px"></div>
<div class="n" style="left:625px;top:235.0px;width:22px;color:#2fbb72">12</div>
<div class="c" style="left:648px;top:232px;width:24px;height:42px"></div>
<div class="n" style="left:648px;top:235.0px;width:24px;color:#2fbb72">13</div>
<div class="c" style="left:673px;top:232px;width:21px;height:42px"></div>
<div class="n" style="left:673px;top:235.0px;width:21px;color:#2fbb72">14</div>
<div class="c" style="left:695px;top:232px;width:24px;height:42px"></div>
<div class="n" style="left:695px;top:235.0px;width:24px;color:#2fbb72">15</div>
<div class="c" style="left:720px;top:232px;width:22px;height:42px"></div>
<div class="n" style="left:720px;top:235.0px;width:22px;color:#2fbb72">16</div>
<div style="position:absolute;left:743px;top:232px;width:266px;height:42px;background:#f15d24;"></div>
<div class="c" style="left:1010px;top:232px;width:32px;height:42px"></div>
<div class="c" style="left:1009px;top:232px;width:1px;height:42px;background:#4b1fe3"></div>
<div class="n" style="left:1010px;top:235.0px;width:32px;color:#5533e6">18</div>
<div class="c" style="left:1043px;top:232px;width:23px;height:42px"></div>
<div class="n" style="left:1043px;top:235.0px;width:23px;color:#2fbb72">19</div>
<div class="c" style="left:1067px;top:232px;width:22px;height:42px"></div>
<div class="n" style="left:1067px;top:235.0px;width:22px;color:#2fbb72">20</div>
<div class="c" style="left:1090px;top:232px;width:22px;height:42px"></div>
<div class="n" style="left:1090px;top:235.0px;width:22px;color:#2fbb72">21</div>
<div class="c" style="left:1113px;top:232px;width:24px;height:42px"></div>
<div class="n" style="left:1113px;top:235.0px;width:24px;color:#2fbb72">22</div>
<div class="c" style="left:1138px;top:232px;width:22px;height:42px"></div>
<div class="n" style="left:1138px;top:235.0px;width:22px;color:#2fbb72">23</div>
<div class="c" style="left:1161px;top:232px;width:23px;height:42px"></div>
<div class="n" style="left:1161px;top:235.0px;width:23px;color:#2fbb72">24</div>
<div class="c" style="left:1185px;top:232px;width:22px;height:42px"></div>
<div class="n" style="left:1185px;top:235.0px;width:22px;color:#2fbb72">25</div>
<div class="c" style="left:1208px;top:232px;width:22px;height:42px"></div>
<div class="n" style="left:1208px;top:235.0px;width:22px;color:#2fbb72">26</div>
<div class="c" style="left:1231px;top:232px;width:23px;height:42px"></div>
<div class="n" style="left:1231px;top:235.0px;width:23px;color:#2fbb72">27</div>
<div class="c" style="left:1255px;top:232px;width:23px;height:42px"></div>
<div class="n" style="left:1255px;top:235.0px;width:23px;color:#2fbb72">28</div>
<div class="c" style="left:1279px;top:232px;width:22px;height:42px"></div>
<div class="n" style="left:1279px;top:235.0px;width:22px;color:#2fbb72">29</div>
<div class="c" style="left:1302px;top:232px;width:22px;height:42px"></div>
<div class="n" style="left:1302px;top:235.0px;width:22px;color:#2fbb72">30</div>
<div class="c" style="left:1325px;top:232px;width:23px;height:42px"></div>
<div class="n" style="left:1325px;top:235.0px;width:23px;color:#2fbb72">31</div>
<div class="t" style="left:851.00px;top:234.82px;font-size:12.5px;font-family:'Liberation Sans',sans-serif;color:#ffe3d3;letter-spacing:0.807px;">17 mars</div>
<div class="t" style="left:758.85px;top:252.63px;font-size:16.5px;font-family:'Liberation Sans',sans-serif;color:#fff1e8;letter-spacing:1.990px;">Week–end du chêne liège</div>
<div class="t" style="left:366.00px;top:275.51px;font-size:17px;font-family:'Liberation Sans',sans-serif;color:rgba(255,255,255,0.72);letter-spacing:0.957px;">avril</div>
<div class="c" style="left:411px;top:275px;width:16px;height:69px"></div>
<div class="n" style="left:411px;top:278.0px;width:16px;color:#2fbb72">1</div>
<div class="c" style="left:428px;top:275px;width:16px;height:69px"></div>
<div class="n" style="left:428px;top:278.0px;width:16px;color:#2fbb72">2</div>
<div class="c" style="left:445px;top:275px;width:17px;height:69px"></div>
<div class="n" style="left:445px;top:278.0px;width:17px;color:#2fbb72">3</div>
<div class="c" style="left:463px;top:275px;width:15px;height:69px"></div>
<div class="n" style="left:463px;top:278.0px;width:15px;color:#2fbb72">4</div>
<div class="c" style="left:479px;top:275px;width:17px;height:69px"></div>
<div class="n" style="left:479px;top:278.0px;width:17px;color:#2fbb72">5</div>
<div class="c" style="left:497px;top:275px;width:17px;height:69px"></div>
<div class="n" style="left:497px;top:278.0px;width:17px;color:#2fbb72">6</div>
<div class="c" style="left:515px;top:275px;width:15px;height:69px"></div>
<div class="n" style="left:515px;top:278.0px;width:15px;color:#2fbb72">7</div>
<div class="c" style="left:531px;top:275px;width:16px;height:69px"></div>
<div class="n" style="left:531px;top:278.0px;width:16px;color:#2fbb72">8</div>
<div class="c" style="left:548px;top:275px;width:16px;height:69px"></div>
<div class="n" style="left:548px;top:278.0px;width:16px;color:#2fbb72">9</div>
<div class="c" style="left:565px;top:275px;width:23px;height:69px"></div>
<div class="n" style="left:565px;top:278.0px;width:23px;color:#2fbb72">10</div>
<div class="c" style="left:589px;top:275px;width:21px;height:69px"></div>
<div class="n" style="left:589px;top:278.0px;width:21px;color:#2fbb72">11</div>
<div class="c" style="left:611px;top:275px;width:22px;height:69px"></div>
<div class="n" style="left:611px;top:278.0px;width:22px;color:#2fbb72">12</div>
<div class="c" style="left:634px;top:275px;width:23px;height:69px"></div>
<div class="n" style="left:634px;top:278.0px;width:23px;color:#2fbb72">13</div>
<div class="c" style="left:658px;top:275px;width:23px;height:69px"></div>
<div class="n" style="left:658px;top:278.0px;width:23px;color:#2fbb72">14</div>
<div class="c" style="left:682px;top:275px;width:22px;height:69px"></div>
<div class="n" style="left:682px;top:278.0px;width:22px;color:#2fbb72">15</div>
<div class="c" style="left:705px;top:275px;width:22px;height:69px"></div>
<div class="n" style="left:705px;top:278.0px;width:22px;color:#2fbb72">16</div>
<div class="c" style="left:728px;top:275px;width:22px;height:69px"></div>
<div class="n" style="left:728px;top:278.0px;width:22px;color:#2fbb72">17</div>
<div class="c" style="left:751px;top:275px;width:21px;height:69px"></div>
<div class="n" style="left:751px;top:278.0px;width:21px;color:#2fbb72">18</div>
<div class="c" style="left:773px;top:275px;width:22px;height:69px"></div>
<div class="n" style="left:773px;top:278.0px;width:22px;color:#2fbb72">19</div>
<div class="c" style="left:796px;top:275px;width:22px;height:69px"></div>
<div class="n" style="left:796px;top:278.0px;width:22px;color:#2fbb72">20</div>
<div class="c" style="left:819px;top:275px;width:23px;height:69px"></div>
<div class="n" style="left:819px;top:278.0px;width:23px;color:#2fbb72">21</div>
<div class="c" style="left:843px;top:275px;width:23px;height:69px"></div>
<div class="n" style="left:843px;top:278.0px;width:23px;color:#2fbb72">22</div>
<div class="c" style="left:867px;top:275px;width:21px;height:69px"></div>
<div class="n" style="left:867px;top:278.0px;width:21px;color:#2fbb72">23</div>
<div class="c" style="left:889px;top:275px;width:22px;height:69px"></div>
<div class="n" style="left:889px;top:278.0px;width:22px;color:#2fbb72">24</div>
<div class="c" style="left:912px;top:275px;width:23px;height:69px"></div>
<div class="n" style="left:912px;top:278.0px;width:23px;color:#2fbb72">25</div>
<div style="position:absolute;left:936px;top:275px;width:272px;height:69px;background:#4b1fe3;"></div>
<div class="c" style="left:1209px;top:275px;width:26px;height:69px"></div>
<div class="c" style="left:1208px;top:275px;width:1px;height:69px;background:#4b1fe3"></div>
<div class="n" style="left:1209px;top:278.0px;width:26px;color:#5533e6">27</div>
<div class="c" style="left:1236px;top:275px;width:27px;height:69px"></div>
<div class="c" style="left:1235px;top:275px;width:1px;height:69px;background:#4b1fe3"></div>
<div class="n" style="left:1236px;top:278.0px;width:27px;color:#5533e6">28</div>
<div class="c" style="left:1264px;top:275px;width:29px;height:69px"></div>
<div class="c" style="left:1263px;top:275px;width:1px;height:69px;background:#4b1fe3"></div>
<div class="n" style="left:1264px;top:278.0px;width:29px;color:#5533e6">29</div>
<div class="c" style="left:1294px;top:275px;width:26px;height:69px"></div>
<div class="c" style="left:1293px;top:275px;width:1px;height:69px;background:#4b1fe3"></div>
<div class="n" style="left:1294px;top:278.0px;width:26px;color:#5533e6">30</div>
<div class="c" style="left:1321px;top:275px;width:27px;height:69px"></div>
<div class="c" style="left:1320px;top:275px;width:1px;height:69px;background:#4b1fe3"></div>
<div class="n" style="left:1321px;top:278.0px;width:27px;color:#5533e6">31</div>
<div class="t" style="left:1049.60px;top:277.82px;font-size:12.5px;font-family:'Liberation Sans',sans-serif;color:#d4ccff;letter-spacing:0.643px;">26 avril</div>
<div class="t" style="left:955.90px;top:295.23px;font-size:16.5px;font-family:'Liberation Sans',sans-serif;color:#f0edff;letter-spacing:1.913px;">33e Festival International</div>
<div class="t" style="left:960.00px;top:311.73px;font-size:16.5px;font-family:'Liberation Sans',sans-serif;color:#f0edff;letter-spacing:1.483px;">de Mode, Photographie et</div>
<div class="t" style="left:969.00px;top:328.23px;font-size:16.5px;font-family:'Liberation Sans',sans-serif;color:#f0edff;letter-spacing:1.448px;">d'Accessoire de Mode à</div>
<div class="t" style="left:367.30px;top:345.61px;font-size:17px;font-family:'Liberation Sans',sans-serif;color:rgba(255,255,255,0.72);letter-spacing:1.303px;">mai</div>
<div class="c" style="left:410px;top:345px;width:26px;height:23px"></div>
<div class="c" style="left:409px;top:345px;width:1px;height:23px;background:#4b1fe3"></div>
<div class="n" style="left:410px;top:348.0px;width:26px;color:#5533e6">1</div>
<div class="c" style="left:437px;top:345px;width:25px;height:23px"></div>
<div class="c" style="left:436px;top:345px;width:1px;height:23px;background:#4b1fe3"></div>
<div class="n" style="left:437px;top:348.0px;width:25px;color:#5533e6">2</div>
<div class="c" style="left:463px;top:345px;width:26px;height:23px"></div>
<div class="c" style="left:462px;top:345px;width:1px;height:23px;background:#4b1fe3"></div>
<div class="n" style="left:463px;top:348.0px;width:26px;color:#5533e6">3</div>
<div class="c" style="left:490px;top:345px;width:26px;height:23px"></div>
<div class="c" style="left:489px;top:345px;width:1px;height:23px;background:#4b1fe3"></div>
<div class="n" style="left:490px;top:348.0px;width:26px;color:#5533e6">4</div>
<div class="c" style="left:517px;top:345px;width:27px;height:23px"></div>
<div class="c" style="left:516px;top:345px;width:1px;height:23px;background:#4b1fe3"></div>
<div class="n" style="left:517px;top:348.0px;width:27px;color:#5533e6">5</div>
<div class="c" style="left:545px;top:345px;width:25px;height:23px"></div>
<div class="c" style="left:544px;top:345px;width:1px;height:23px;background:#4b1fe3"></div>
<div class="n" style="left:545px;top:348.0px;width:25px;color:#5533e6">6</div>
<div class="c" style="left:571px;top:345px;width:25px;height:23px"></div>
<div class="c" style="left:570px;top:345px;width:1px;height:23px;background:#4b1fe3"></div>
<div class="n" style="left:571px;top:348.0px;width:25px;color:#5533e6">7</div>
<div class="c" style="left:597px;top:345px;width:27px;height:23px"></div>
<div class="c" style="left:596px;top:345px;width:1px;height:23px;background:#4b1fe3"></div>
<div class="n" style="left:597px;top:348.0px;width:27px;color:#5533e6">8</div>
<div class="c" style="left:625px;top:345px;width:25px;height:23px"></div>
<div class="c" style="left:624px;top:345px;width:1px;height:23px;background:#4b1fe3"></div>
<div class="n" style="left:625px;top:348.0px;width:25px;color:#5533e6">9</div>
<div class="c" style="left:651px;top:345px;width:32px;height:23px"></div>
<div class="c" style="left:650px;top:345px;width:1px;height:23px;background:#4b1fe3"></div>
<div class="n" style="left:651px;top:348.0px;width:32px;color:#5533e6">10</div>
<div class="c" style="left:684px;top:345px;width:32px;height:23px"></div>
<div class="c" style="left:683px;top:345px;width:1px;height:23px;background:#4b1fe3"></div>
<div class="n" style="left:684px;top:348.0px;width:32px;color:#5533e6">11</div>
<div class="c" style="left:717px;top:345px;width:31px;height:23px"></div>
<div class="c" style="left:716px;top:345px;width:1px;height:23px;background:#4b1fe3"></div>
<div class="n" style="left:717px;top:348.0px;width:31px;color:#5533e6">12</div>
<div class="c" style="left:749px;top:345px;width:33px;height:23px"></div>
<div class="c" style="left:748px;top:345px;width:1px;height:23px;background:#4b1fe3"></div>
<div class="n" style="left:749px;top:348.0px;width:33px;color:#5533e6">13</div>
<div class="c" style="left:783px;top:345px;width:31px;height:23px"></div>
<div class="c" style="left:782px;top:345px;width:1px;height:23px;background:#4b1fe3"></div>
<div class="n" style="left:783px;top:348.0px;width:31px;color:#5533e6">14</div>
<div class="c" style="left:815px;top:345px;width:32px;height:23px"></div>
<div class="c" style="left:814px;top:345px;width:1px;height:23px;background:#4b1fe3"></div>
<div class="n" style="left:815px;top:348.0px;width:32px;color:#5533e6">15</div>
<div class="c" style="left:848px;top:345px;width:32px;height:23px"></div>
<div class="c" style="left:847px;top:345px;width:1px;height:23px;background:#4b1fe3"></div>
<div class="n" style="left:848px;top:348.0px;width:32px;color:#5533e6">16</div>
<div class="c" style="left:881px;top:345px;width:32px;height:23px"></div>
<div class="c" style="left:880px;top:345px;width:1px;height:23px;background:#4b1fe3"></div>
<div class="n" style="left:881px;top:348.0px;width:32px;color:#5533e6">17</div>
<div class="c" style="left:914px;top:345px;width:31px;height:23px"></div>
<div class="c" style="left:913px;top:345px;width:1px;height:23px;background:#4b1fe3"></div>
<div class="n" style="left:914px;top:348.0px;width:31px;color:#5533e6">18</div>
<div class="c" style="left:946px;top:345px;width:31px;height:23px"></div>
<div class="c" style="left:945px;top:345px;width:1px;height:23px;background:#4b1fe3"></div>
<div class="n" style="left:946px;top:348.0px;width:31px;color:#5533e6">19</div>
<div class="c" style="left:978px;top:345px;width:32px;height:23px"></div>
<div class="c" style="left:977px;top:345px;width:1px;height:23px;background:#4b1fe3"></div>
<div class="n" style="left:978px;top:348.0px;width:32px;color:#5533e6">20</div>
<div class="c" style="left:1011px;top:345px;width:32px;height:23px"></div>
<div class="c" style="left:1010px;top:345px;width:1px;height:23px;background:#4b1fe3"></div>
<div class="n" style="left:1011px;top:348.0px;width:32px;color:#5533e6">21</div>
<div class="c" style="left:1044px;top:345px;width:32px;height:23px"></div>
<div class="c" style="left:1043px;top:345px;width:1px;height:23px;background:#4b1fe3"></div>
<div class="n" style="left:1044px;top:348.0px;width:32px;color:#5533e6">22</div>
<div class="c" style="left:1077px;top:345px;width:31px;height:23px"></div>
<div class="c" style="left:1076px;top:345px;width:1px;height:23px;background:#4b1fe3"></div>
<div class="n" style="left:1077px;top:348.0px;width:31px;color:#5533e6">23</div>
<div class="c" style="left:1109px;top:345px;width:33px;height:23px"></div>
<div class="c" style="left:1108px;top:345px;width:1px;height:23px;background:#4b1fe3"></div>
<div class="n" style="left:1109px;top:348.0px;width:33px;color:#5533e6">24</div>
<div class="c" style="left:1143px;top:345px;width:31px;height:23px"></div>
<div class="c" style="left:1142px;top:345px;width:1px;height:23px;background:#4b1fe3"></div>
<div class="n" style="left:1143px;top:348.0px;width:31px;color:#5533e6">25</div>
<div class="c" style="left:1175px;top:345px;width:33px;height:23px"></div>
<div class="c" style="left:1174px;top:345px;width:1px;height:23px;background:#4b1fe3"></div>
<div class="n" style="left:1175px;top:348.0px;width:33px;color:#5533e6">26</div>
<div class="c" style="left:1209px;top:345px;width:34px;height:23px"></div>
<div class="c" style="left:1208px;top:345px;width:1px;height:23px;background:#4b1fe3"></div>
<div class="n" style="left:1209px;top:348.0px;width:34px;color:#5533e6">27</div>
<div class="c" style="left:1244px;top:345px;width:26px;height:23px"></div>
<div class="n" style="left:1244px;top:348.0px;width:26px;color:#2fbb72">28</div>
<div class="c" style="left:1271px;top:345px;width:25px;height:23px"></div>
<div class="n" style="left:1271px;top:348.0px;width:25px;color:#2fbb72">29</div>
<div class="c" style="left:1297px;top:345px;width:25px;height:23px"></div>
<div class="n" style="left:1297px;top:348.0px;width:25px;color:#2fbb72">30</div>
<div class="c" style="left:1323px;top:345px;width:25px;height:23px"></div>
<div class="n" style="left:1323px;top:348.0px;width:25px;color:#2fbb72">31</div>
<div class="t" style="left:367.30px;top:368.81px;font-size:17px;font-family:'Liberation Sans',sans-serif;color:rgba(255,255,255,0.72);letter-spacing:1.612px;">juin</div>
<div class="c" style="left:412px;top:369px;width:20px;height:42px"></div>
<div class="n" style="left:412px;top:372.0px;width:20px;color:#2fbb72">1</div>
<div class="c" style="left:433px;top:369px;width:21px;height:42px"></div>
<div class="n" style="left:433px;top:372.0px;width:21px;color:#2fbb72">2</div>
<div class="c" style="left:455px;top:369px;width:20px;height:42px"></div>
<div class="n" style="left:455px;top:372.0px;width:20px;color:#2fbb72">3</div>
<div class="c" style="left:476px;top:369px;width:21px;height:42px"></div>
<div class="n" style="left:476px;top:372.0px;width:21px;color:#2fbb72">4</div>
<div class="c" style="left:498px;top:369px;width:20px;height:42px"></div>
<div class="n" style="left:498px;top:372.0px;width:20px;color:#2fbb72">5</div>
<div class="c" style="left:519px;top:369px;width:21px;height:42px"></div>
<div class="n" style="left:519px;top:372.0px;width:21px;color:#2fbb72">6</div>
<div class="c" style="left:541px;top:369px;width:20px;height:42px"></div>
<div class="n" style="left:541px;top:372.0px;width:20px;color:#2fbb72">7</div>
<div class="c" style="left:562px;top:369px;width:21px;height:42px"></div>
<div class="n" style="left:562px;top:372.0px;width:21px;color:#2fbb72">8</div>
<div class="c" style="left:584px;top:369px;width:21px;height:42px"></div>
<div class="n" style="left:584px;top:372.0px;width:21px;color:#2fbb72">9</div>
<div class="c" style="left:606px;top:369px;width:26px;height:42px"></div>
<div class="n" style="left:606px;top:372.0px;width:26px;color:#2fbb72">10</div>
<div class="c" style="left:633px;top:369px;width:26px;height:42px"></div>
<div class="n" style="left:633px;top:372.0px;width:26px;color:#2fbb72">11</div>
<div class="c" style="left:660px;top:369px;width:27px;height:42px"></div>
<div class="n" style="left:660px;top:372.0px;width:27px;color:#2fbb72">12</div>
<div class="c" style="left:688px;top:369px;width:27px;height:42px"></div>
<div class="n" style="left:688px;top:372.0px;width:27px;color:#2fbb72">13</div>
<div class="c" style="left:716px;top:369px;width:26px;height:42px"></div>
<div class="n" style="left:716px;top:372.0px;width:26px;color:#2fbb72">14</div>
<div class="c" style="left:743px;top:369px;width:27px;height:42px"></div>
<div class="n" style="left:743px;top:372.0px;width:27px;color:#2fbb72">15</div>
<div class="c" style="left:771px;top:369px;width:26px;height:42px"></div>
<div class="n" style="left:771px;top:372.0px;width:26px;color:#2fbb72">16</div>
<div class="c" style="left:798px;top:369px;width:26px;height:42px"></div>
<div class="n" style="left:798px;top:372.0px;width:26px;color:#2fbb72">17</div>
<div class="c" style="left:825px;top:369px;width:27px;height:42px"></div>
<div class="n" style="left:825px;top:372.0px;width:27px;color:#2fbb72">18</div>
<div class="c" style="left:853px;top:369px;width:26px;height:42px"></div>
<div class="n" style="left:853px;top:372.0px;width:26px;color:#2fbb72">19</div>
<div class="c" style="left:880px;top:369px;width:27px;height:42px"></div>
<div class="n" style="left:880px;top:372.0px;width:27px;color:#2fbb72">20</div>
<div class="c" style="left:908px;top:369px;width:26px;height:42px"></div>
<div class="n" style="left:908px;top:372.0px;width:26px;color:#2fbb72">21</div>
<div class="c" style="left:935px;top:369px;width:27px;height:42px"></div>
<div class="n" style="left:935px;top:372.0px;width:27px;color:#2fbb72">22</div>
<div class="c" style="left:963px;top:369px;width:26px;height:42px"></div>
<div class="n" style="left:963px;top:372.0px;width:26px;color:#2fbb72">23</div>
<div class="c" style="left:990px;top:369px;width:26px;height:42px"></div>
<div class="n" style="left:990px;top:372.0px;width:26px;color:#2fbb72">24</div>
<div class="c" style="left:1017px;top:369px;width:27px;height:42px"></div>
<div class="n" style="left:1017px;top:372.0px;width:27px;color:#2fbb72">25</div>
<div class="c" style="left:1045px;top:369px;width:27px;height:42px"></div>
<div class="n" style="left:1045px;top:372.0px;width:27px;color:#2fbb72">26</div>
<div class="c" style="left:1073px;top:369px;width:27px;height:42px"></div>
<div class="n" style="left:1073px;top:372.0px;width:27px;color:#2fbb72">27</div>
<div style="position:absolute;left:1101px;top:369px;width:166px;height:42px;background:#4b1fe3;"></div>
<div class="c" style="left:1268px;top:369px;width:25px;height:42px"></div>
<div class="n" style="left:1268px;top:372.0px;width:25px;color:#2fbb72">29</div>
<div class="c" style="left:1294px;top:369px;width:28px;height:42px"></div>
<div class="n" style="left:1294px;top:372.0px;width:28px;color:#2fbb72">30</div>
<div class="c" style="left:1323px;top:369px;width:25px;height:42px"></div>
<div class="n" style="left:1323px;top:372.0px;width:25px;color:#2fbb72">31</div>
<div class="t" style="left:1163.20px;top:371.82px;font-size:12.5px;font-family:'Liberation Sans',sans-serif;color:#d4ccff;letter-spacing:0.794px;">28 juin</div>
<div class="t" style="left:1119.00px;top:389.63px;font-size:16.5px;font-family:'Liberation Sans',sans-serif;color:#f0edff;letter-spacing:1.889px;">Design parade</div>
<div class="t" style="left:370.00px;top:412.31px;font-size:17px;font-family:'Liberation Sans',sans-serif;color:rgba(255,255,255,0.72);letter-spacing:1.376px;">juillet</div>
<div class="c" style="left:433px;top:412px;width:23px;height:23px"></div>
<div class="n" style="left:433px;top:415.0px;width:23px;color:#2fbb72">1</div>
<div class="c" style="left:457px;top:412px;width:25px;height:23px"></div>
<div class="n" style="left:457px;top:415.0px;width:25px;color:#2fbb72">2</div>
<div class="c" style="left:483px;top:412px;width:24px;height:23px"></div>
<div class="n" style="left:483px;top:415.0px;width:24px;color:#2fbb72">3</div>
<div class="c" style="left:508px;top:412px;width:25px;height:23px"></div>
<div class="n" style="left:508px;top:415.0px;width:25px;color:#2fbb72">4</div>
<div class="c" style="left:534px;top:412px;width:24px;height:23px"></div>
<div class="n" style="left:534px;top:415.0px;width:24px;color:#2fbb72">5</div>
<div class="c" style="left:559px;top:412px;width:24px;height:23px"></div>
<div class="n" style="left:559px;top:415.0px;width:24px;color:#2fbb72">6</div>
<div class="c" style="left:584px;top:412px;width:24px;height:23px"></div>
<div class="n" style="left:584px;top:415.0px;width:24px;color:#2fbb72">7</div>
<div class="c" style="left:609px;top:412px;width:25px;height:23px"></div>
<div class="n" style="left:609px;top:415.0px;width:25px;color:#2fbb72">8</div>
<div class="c" style="left:635px;top:412px;width:25px;height:23px"></div>
<div class="n" style="left:635px;top:415.0px;width:25px;color:#2fbb72">9</div>
<div class="c" style="left:661px;top:412px;width:30px;height:23px"></div>
<div class="n" style="left:661px;top:415.0px;width:30px;color:#2fbb72">10</div>
<div class="c" style="left:692px;top:412px;width:30px;height:23px"></div>
<div class="n" style="left:692px;top:415.0px;width:30px;color:#2fbb72">11</div>
<div class="c" style="left:723px;top:412px;width:30px;height:23px"></div>
<div class="n" style="left:723px;top:415.0px;width:30px;color:#2fbb72">12</div>
<div class="c" style="left:754px;top:412px;width:31px;height:23px"></div>
<div class="n" style="left:754px;top:415.0px;width:31px;color:#2fbb72">13</div>
<div class="c" style="left:786px;top:412px;width:31px;height:23px"></div>
<div class="n" style="left:786px;top:415.0px;width:31px;color:#2fbb72">14</div>
<div class="c" style="left:818px;top:412px;width:30px;height:23px"></div>
<div class="n" style="left:818px;top:415.0px;width:30px;color:#2fbb72">15</div>
<div class="c" style="left:849px;top:412px;width:30px;height:23px"></div>
<div class="n" style="left:849px;top:415.0px;width:30px;color:#2fbb72">16</div>
<div class="c" style="left:880px;top:412px;width:30px;height:23px"></div>
<div class="n" style="left:880px;top:415.0px;width:30px;color:#2fbb72">17</div>
<div class="c" style="left:911px;top:412px;width:31px;height:23px"></div>
<div class="n" style="left:911px;top:415.0px;width:31px;color:#2fbb72">18</div>
<div class="c" style="left:943px;top:412px;width:30px;height:23px"></div>
<div class="n" style="left:943px;top:415.0px;width:30px;color:#2fbb72">19</div>
<div class="c" style="left:974px;top:412px;width:31px;height:23px"></div>
<div class="n" style="left:974px;top:415.0px;width:31px;color:#2fbb72">20</div>
<div class="c" style="left:1006px;top:412px;width:30px;height:23px"></div>
<div class="n" style="left:1006px;top:415.0px;width:30px;color:#2fbb72">21</div>
<div class="c" style="left:1037px;top:412px;width:30px;height:23px"></div>
<div class="n" style="left:1037px;top:415.0px;width:30px;color:#2fbb72">22</div>
<div class="c" style="left:1068px;top:412px;width:30px;height:23px"></div>
<div class="n" style="left:1068px;top:415.0px;width:30px;color:#2fbb72">23</div>
<div class="c" style="left:1099px;top:412px;width:30px;height:23px"></div>
<div class="n" style="left:1099px;top:415.0px;width:30px;color:#2fbb72">24</div>
<div class="c" style="left:1130px;top:412px;width:31px;height:23px"></div>
<div class="n" style="left:1130px;top:415.0px;width:31px;color:#2fbb72">25</div>
<div class="c" style="left:1162px;top:412px;width:30px;height:23px"></div>
<div class="n" style="left:1162px;top:415.0px;width:30px;color:#2fbb72">26</div>
<div class="c" style="left:1193px;top:412px;width:31px;height:23px"></div>
<div class="n" style="left:1193px;top:415.0px;width:31px;color:#2fbb72">27</div>
<div class="c" style="left:1225px;top:412px;width:30px;height:23px"></div>
<div class="n" style="left:1225px;top:415.0px;width:30px;color:#2fbb72">28</div>
<div class="c" style="left:1256px;top:412px;width:30px;height:23px"></div>
<div class="n" style="left:1256px;top:415.0px;width:30px;color:#2fbb72">29</div>
<div class="c" style="left:1287px;top:412px;width:30px;height:23px"></div>
<div class="n" style="left:1287px;top:415.0px;width:30px;color:#2fbb72">30</div>
<div class="c" style="left:1318px;top:412px;width:30px;height:23px"></div>
<div class="n" style="left:1318px;top:415.0px;width:30px;color:#2fbb72">31</div>
<div class="t" style="left:369.50px;top:436.51px;font-size:17px;font-family:'Liberation Sans',sans-serif;color:rgba(255,255,255,0.72);letter-spacing:1.637px;">aout</div>
<div class="c" style="left:424px;top:436px;width:24px;height:23px"></div>
<div class="n" style="left:424px;top:439.0px;width:24px;color:#2fbb72">1</div>
<div class="c" style="left:449px;top:436px;width:26px;height:23px"></div>
<div class="n" style="left:449px;top:439.0px;width:26px;color:#2fbb72">2</div>
<div class="c" style="left:476px;top:436px;width:24px;height:23px"></div>
<div class="n" style="left:476px;top:439.0px;width:24px;color:#2fbb72">3</div>
<div class="c" style="left:501px;top:436px;width:24px;height:23px"></div>
<div class="n" style="left:501px;top:439.0px;width:24px;color:#2fbb72">4</div>
<div class="c" style="left:526px;top:436px;width:25px;height:23px"></div>
<div class="n" style="left:526px;top:439.0px;width:25px;color:#2fbb72">5</div>
<div class="c" style="left:552px;top:436px;width:24px;height:23px"></div>
<div class="n" style="left:552px;top:439.0px;width:24px;color:#2fbb72">6</div>
<div class="c" style="left:577px;top:436px;width:25px;height:23px"></div>
<div class="n" style="left:577px;top:439.0px;width:25px;color:#2fbb72">7</div>
<div class="c" style="left:603px;top:436px;width:25px;height:23px"></div>
<div class="n" style="left:603px;top:439.0px;width:25px;color:#2fbb72">8</div>
<div class="c" style="left:629px;top:436px;width:25px;height:23px"></div>
<div class="n" style="left:629px;top:439.0px;width:25px;color:#2fbb72">9</div>
<div class="c" style="left:655px;top:436px;width:29px;height:23px"></div>
<div class="n" style="left:655px;top:439.0px;width:29px;color:#2fbb72">10</div>
<div class="c" style="left:685px;top:436px;width:31px;height:23px"></div>
<div class="n" style="left:685px;top:439.0px;width:31px;color:#2fbb72">11</div>
<div class="c" style="left:717px;top:436px;width:31px;height:23px"></div>
<div class="n" style="left:717px;top:439.0px;width:31px;color:#2fbb72">12</div>
<div class="c" style="left:749px;top:436px;width:31px;height:23px"></div>
<div class="n" style="left:749px;top:439.0px;width:31px;color:#2fbb72">13</div>
<div class="c" style="left:781px;top:436px;width:30px;height:23px"></div>
<div class="n" style="left:781px;top:439.0px;width:30px;color:#2fbb72">14</div>
<div class="c" style="left:812px;top:436px;width:31px;height:23px"></div>
<div class="n" style="left:812px;top:439.0px;width:31px;color:#2fbb72">15</div>
<div class="c" style="left:844px;top:436px;width:31px;height:23px"></div>
<div class="n" style="left:844px;top:439.0px;width:31px;color:#2fbb72">16</div>
<div class="c" style="left:876px;top:436px;width:31px;height:23px"></div>
<div class="n" style="left:876px;top:439.0px;width:31px;color:#2fbb72">17</div>
<div class="c" style="left:908px;top:436px;width:30px;height:23px"></div>
<div class="n" style="left:908px;top:439.0px;width:30px;color:#2fbb72">18</div>
<div class="c" style="left:939px;top:436px;width:30px;height:23px"></div>
<div class="n" style="left:939px;top:439.0px;width:30px;color:#2fbb72">19</div>
<div class="c" style="left:970px;top:436px;width:31px;height:23px"></div>
<div class="n" style="left:970px;top:439.0px;width:31px;color:#2fbb72">20</div>
<div class="c" style="left:1002px;top:436px;width:30px;height:23px"></div>
<div class="n" style="left:1002px;top:439.0px;width:30px;color:#2fbb72">21</div>
<div class="c" style="left:1033px;top:436px;width:31px;height:23px"></div>
<div class="n" style="left:1033px;top:439.0px;width:31px;color:#2fbb72">22</div>
<div class="c" style="left:1065px;top:436px;width:31px;height:23px"></div>
<div class="n" style="left:1065px;top:439.0px;width:31px;color:#2fbb72">23</div>
<div class="c" style="left:1097px;top:436px;width:30px;height:23px"></div>
<div class="n" style="left:1097px;top:439.0px;width:30px;color:#2fbb72">24</div>
<div class="c" style="left:1128px;top:436px;width:30px;height:23px"></div>
<div class="n" style="left:1128px;top:439.0px;width:30px;color:#2fbb72">25</div>
<div class="c" style="left:1159px;top:436px;width:31px;height:23px"></div>
<div class="n" style="left:1159px;top:439.0px;width:31px;color:#2fbb72">26</div>
<div class="c" style="left:1191px;top:436px;width:31px;height:23px"></div>
<div class="n" style="left:1191px;top:439.0px;width:31px;color:#2fbb72">27</div>
<div class="c" style="left:1223px;top:436px;width:31px;height:23px"></div>
<div class="n" style="left:1223px;top:439.0px;width:31px;color:#2fbb72">28</div>
<div class="c" style="left:1255px;top:436px;width:30px;height:23px"></div>
<div class="n" style="left:1255px;top:439.0px;width:30px;color:#2fbb72">29</div>
<div class="c" style="left:1286px;top:436px;width:30px;height:23px"></div>
<div class="n" style="left:1286px;top:439.0px;width:30px;color:#2fbb72">30</div>
<div class="c" style="left:1317px;top:436px;width:31px;height:23px"></div>
<div class="n" style="left:1317px;top:439.0px;width:31px;color:#2fbb72">31</div>
<div class="t" style="left:366.60px;top:460.61px;font-size:17px;font-family:'Liberation Sans',sans-serif;color:rgba(255,255,255,0.72);letter-spacing:1.335px;">septembre</div>
<div class="c" style="left:467px;top:460px;width:24px;height:23px"></div>
<div class="c" style="left:466px;top:460px;width:1px;height:23px;background:#f15d24"></div>
<div class="n" style="left:467px;top:463.0px;width:24px;color:#f26a36">1</div>
<div class="c" style="left:492px;top:460px;width:23px;height:23px"></div>
<div class="c" style="left:491px;top:460px;width:1px;height:23px;background:#f15d24"></div>
<div class="n" style="left:492px;top:463.0px;width:23px;color:#f26a36">2</div>
<div class="c" style="left:516px;top:460px;width:23px;height:23px"></div>
<div class="c" style="left:515px;top:460px;width:1px;height:23px;background:#f15d24"></div>
<div class="n" style="left:516px;top:463.0px;width:23px;color:#f26a36">3</div>
<div class="c" style="left:540px;top:460px;width:24px;height:23px"></div>
<div class="c" style="left:539px;top:460px;width:1px;height:23px;background:#f15d24"></div>
<div class="n" style="left:540px;top:463.0px;width:24px;color:#f26a36">4</div>
<div class="c" style="left:565px;top:460px;width:23px;height:23px"></div>
<div class="c" style="left:564px;top:460px;width:1px;height:23px;background:#f15d24"></div>
<div class="n" style="left:565px;top:463.0px;width:23px;color:#f26a36">5</div>
<div class="c" style="left:589px;top:460px;width:23px;height:23px"></div>
<div class="c" style="left:588px;top:460px;width:1px;height:23px;background:#f15d24"></div>
<div class="n" style="left:589px;top:463.0px;width:23px;color:#f26a36">6</div>
<div class="c" style="left:613px;top:460px;width:23px;height:23px"></div>
<div class="c" style="left:612px;top:460px;width:1px;height:23px;background:#f15d24"></div>
<div class="n" style="left:613px;top:463.0px;width:23px;color:#f26a36">7</div>
<div class="c" style="left:637px;top:460px;width:25px;height:23px"></div>
<div class="c" style="left:636px;top:460px;width:1px;height:23px;background:#f15d24"></div>
<div class="n" style="left:637px;top:463.0px;width:25px;color:#f26a36">8</div>
<div class="c" style="left:663px;top:460px;width:23px;height:23px"></div>
<div class="c" style="left:662px;top:460px;width:1px;height:23px;background:#f15d24"></div>
<div class="n" style="left:663px;top:463.0px;width:23px;color:#f26a36">9</div>
<div class="c" style="left:687px;top:460px;width:28px;height:23px"></div>
<div class="c" style="left:686px;top:460px;width:1px;height:23px;background:#f15d24"></div>
<div class="n" style="left:687px;top:463.0px;width:28px;color:#f26a36">10</div>
<div class="c" style="left:716px;top:460px;width:30px;height:23px"></div>
<div class="c" style="left:715px;top:460px;width:1px;height:23px;background:#f15d24"></div>
<div class="n" style="left:716px;top:463.0px;width:30px;color:#f26a36">11</div>
<div class="c" style="left:747px;top:460px;width:29px;height:23px"></div>
<div class="c" style="left:746px;top:460px;width:1px;height:23px;background:#f15d24"></div>
<div class="n" style="left:747px;top:463.0px;width:29px;color:#f26a36">12</div>
<div class="c" style="left:777px;top:460px;width:30px;height:23px"></div>
<div class="c" style="left:776px;top:460px;width:1px;height:23px;background:#f15d24"></div>
<div class="n" style="left:777px;top:463.0px;width:30px;color:#f26a36">13</div>
<div class="c" style="left:808px;top:460px;width:29px;height:23px"></div>
<div class="c" style="left:807px;top:460px;width:1px;height:23px;background:#f15d24"></div>
<div class="n" style="left:808px;top:463.0px;width:29px;color:#f26a36">14</div>
<div class="c" style="left:838px;top:460px;width:29px;height:23px"></div>
<div class="c" style="left:837px;top:460px;width:1px;height:23px;background:#f15d24"></div>
<div class="n" style="left:838px;top:463.0px;width:29px;color:#f26a36">15</div>
<div class="c" style="left:868px;top:460px;width:29px;height:23px"></div>
<div class="c" style="left:867px;top:460px;width:1px;height:23px;background:#f15d24"></div>
<div class="n" style="left:868px;top:463.0px;width:29px;color:#f26a36">16</div>
<div class="c" style="left:898px;top:460px;width:30px;height:23px"></div>
<div class="c" style="left:897px;top:460px;width:1px;height:23px;background:#f15d24"></div>
<div class="n" style="left:898px;top:463.0px;width:30px;color:#f26a36">17</div>
<div class="c" style="left:929px;top:460px;width:29px;height:23px"></div>
<div class="c" style="left:928px;top:460px;width:1px;height:23px;background:#f15d24"></div>
<div class="n" style="left:929px;top:463.0px;width:29px;color:#f26a36">18</div>
<div class="c" style="left:959px;top:460px;width:29px;height:23px"></div>
<div class="c" style="left:958px;top:460px;width:1px;height:23px;background:#f15d24"></div>
<div class="n" style="left:959px;top:463.0px;width:29px;color:#f26a36">19</div>
<div class="c" style="left:989px;top:460px;width:30px;height:23px"></div>
<div class="c" style="left:988px;top:460px;width:1px;height:23px;background:#f15d24"></div>
<div class="n" style="left:989px;top:463.0px;width:30px;color:#f26a36">20</div>
<div class="c" style="left:1020px;top:460px;width:29px;height:23px"></div>
<div class="c" style="left:1019px;top:460px;width:1px;height:23px;background:#f15d24"></div>
<div class="n" style="left:1020px;top:463.0px;width:29px;color:#f26a36">21</div>
<div class="c" style="left:1050px;top:460px;width:30px;height:23px"></div>
<div class="c" style="left:1049px;top:460px;width:1px;height:23px;background:#f15d24"></div>
<div class="n" style="left:1050px;top:463.0px;width:30px;color:#f26a36">22</div>
<div class="c" style="left:1081px;top:460px;width:29px;height:23px"></div>
<div class="c" style="left:1080px;top:460px;width:1px;height:23px;background:#f15d24"></div>
<div class="n" style="left:1081px;top:463.0px;width:29px;color:#f26a36">23</div>
<div class="c" style="left:1111px;top:460px;width:29px;height:23px"></div>
<div class="c" style="left:1110px;top:460px;width:1px;height:23px;background:#f15d24"></div>
<div class="n" style="left:1111px;top:463.0px;width:29px;color:#f26a36">24</div>
<div class="c" style="left:1141px;top:460px;width:29px;height:23px"></div>
<div class="c" style="left:1140px;top:460px;width:1px;height:23px;background:#f15d24"></div>
<div class="n" style="left:1141px;top:463.0px;width:29px;color:#f26a36">25</div>
<div class="c" style="left:1171px;top:460px;width:30px;height:23px"></div>
<div class="c" style="left:1170px;top:460px;width:1px;height:23px;background:#f15d24"></div>
<div class="n" style="left:1171px;top:463.0px;width:30px;color:#f26a36">26</div>
<div class="c" style="left:1202px;top:460px;width:29px;height:23px"></div>
<div class="c" style="left:1201px;top:460px;width:1px;height:23px;background:#f15d24"></div>
<div class="n" style="left:1202px;top:463.0px;width:29px;color:#f26a36">27</div>
<div class="c" style="left:1232px;top:460px;width:30px;height:23px"></div>
<div class="c" style="left:1231px;top:460px;width:1px;height:23px;background:#f15d24"></div>
<div class="n" style="left:1232px;top:463.0px;width:30px;color:#f26a36">28</div>
<div class="c" style="left:1263px;top:460px;width:28px;height:23px"></div>
<div class="c" style="left:1262px;top:460px;width:1px;height:23px;background:#f15d24"></div>
<div class="n" style="left:1263px;top:463.0px;width:28px;color:#f26a36">29</div>
<div class="c" style="left:1292px;top:460px;width:31px;height:23px"></div>
<div class="c" style="left:1291px;top:460px;width:1px;height:23px;background:#f15d24"></div>
<div class="n" style="left:1292px;top:463.0px;width:31px;color:#f26a36">30</div>
<div class="c" style="left:1324px;top:460px;width:24px;height:23px"></div>
<div class="n" style="left:1324px;top:463.0px;width:24px;color:#2fbb72">31</div>
<div class="t" style="left:365.90px;top:484.31px;font-size:17px;font-family:'Liberation Sans',sans-serif;color:rgba(255,255,255,0.72);letter-spacing:1.549px;">octobre</div>
<div class="c" style="left:442px;top:484px;width:15px;height:42px"></div>
<div class="n" style="left:442px;top:487.0px;width:15px;color:#2fbb72">1</div>
<div class="c" style="left:458px;top:484px;width:16px;height:42px"></div>
<div class="n" style="left:458px;top:487.0px;width:16px;color:#2fbb72">2</div>
<div class="c" style="left:475px;top:484px;width:17px;height:42px"></div>
<div class="n" style="left:475px;top:487.0px;width:17px;color:#2fbb72">3</div>
<div class="c" style="left:493px;top:484px;width:15px;height:42px"></div>
<div class="n" style="left:493px;top:487.0px;width:15px;color:#2fbb72">4</div>
<div class="c" style="left:509px;top:484px;width:16px;height:42px"></div>
<div class="n" style="left:509px;top:487.0px;width:16px;color:#2fbb72">5</div>
<div class="c" style="left:526px;top:484px;width:17px;height:42px"></div>
<div class="n" style="left:526px;top:487.0px;width:17px;color:#2fbb72">6</div>
<div class="c" style="left:544px;top:484px;width:16px;height:42px"></div>
<div class="n" style="left:544px;top:487.0px;width:16px;color:#2fbb72">7</div>
<div class="c" style="left:561px;top:484px;width:15px;height:42px"></div>
<div class="n" style="left:561px;top:487.0px;width:15px;color:#2fbb72">8</div>
<div class="c" style="left:577px;top:484px;width:17px;height:42px"></div>
<div class="n" style="left:577px;top:487.0px;width:17px;color:#2fbb72">9</div>
<div class="c" style="left:595px;top:484px;width:20px;height:42px"></div>
<div class="n" style="left:595px;top:487.0px;width:20px;color:#2fbb72">10</div>
<div class="c" style="left:616px;top:484px;width:22px;height:42px"></div>
<div class="n" style="left:616px;top:487.0px;width:22px;color:#2fbb72">11</div>
<div class="c" style="left:639px;top:484px;width:23px;height:42px"></div>
<div class="n" style="left:639px;top:487.0px;width:23px;color:#2fbb72">12</div>
<div style="position:absolute;left:663px;top:484px;width:272px;height:42px;background:#4b1fe3;"></div>
<div class="c" style="left:936px;top:484px;width:22px;height:42px"></div>
<div class="n" style="left:936px;top:487.0px;width:22px;color:#2fbb72">14</div>
<div class="c" style="left:959px;top:484px;width:22px;height:42px"></div>
<div class="n" style="left:959px;top:487.0px;width:22px;color:#2fbb72">15</div>
<div class="c" style="left:982px;top:484px;width:23px;height:42px"></div>
<div class="n" style="left:982px;top:487.0px;width:23px;color:#2fbb72">16</div>
<div class="c" style="left:1006px;top:484px;width:21px;height:42px"></div>
<div class="n" style="left:1006px;top:487.0px;width:21px;color:#2fbb72">17</div>
<div class="c" style="left:1028px;top:484px;width:22px;height:42px"></div>
<div class="n" style="left:1028px;top:487.0px;width:22px;color:#2fbb72">18</div>
<div class="c" style="left:1051px;top:484px;width:21px;height:42px"></div>
<div class="n" style="left:1051px;top:487.0px;width:21px;color:#2fbb72">19</div>
<div class="c" style="left:1073px;top:484px;width:23px;height:42px"></div>
<div class="n" style="left:1073px;top:487.0px;width:23px;color:#2fbb72">20</div>
<div class="c" style="left:1097px;top:484px;width:21px;height:42px"></div>
<div class="n" style="left:1097px;top:487.0px;width:21px;color:#2fbb72">21</div>
<div class="c" style="left:1119px;top:484px;width:22px;height:42px"></div>
<div class="n" style="left:1119px;top:487.0px;width:22px;color:#2fbb72">22</div>
<div class="c" style="left:1142px;top:484px;width:22px;height:42px"></div>
<div class="n" style="left:1142px;top:487.0px;width:22px;color:#2fbb72">23</div>
<div class="c" style="left:1165px;top:484px;width:22px;height:42px"></div>
<div class="n" style="left:1165px;top:487.0px;width:22px;color:#2fbb72">24</div>
<div class="c" style="left:1188px;top:484px;width:23px;height:42px"></div>
<div class="n" style="left:1188px;top:487.0px;width:23px;color:#2fbb72">25</div>
<div class="c" style="left:1212px;top:484px;width:21px;height:42px"></div>
<div class="n" style="left:1212px;top:487.0px;width:21px;color:#2fbb72">26</div>
<div class="c" style="left:1234px;top:484px;width:22px;height:42px"></div>
<div class="n" style="left:1234px;top:487.0px;width:22px;color:#2fbb72">27</div>
<div class="c" style="left:1257px;top:484px;width:23px;height:42px"></div>
<div class="n" style="left:1257px;top:487.0px;width:23px;color:#2fbb72">28</div>
<div class="c" style="left:1281px;top:484px;width:21px;height:42px"></div>
<div class="n" style="left:1281px;top:487.0px;width:21px;color:#2fbb72">29</div>
<div class="c" style="left:1303px;top:484px;width:22px;height:42px"></div>
<div class="n" style="left:1303px;top:487.0px;width:22px;color:#2fbb72">30</div>
<div class="c" style="left:1326px;top:484px;width:22px;height:42px"></div>
<div class="n" style="left:1326px;top:487.0px;width:22px;color:#2fbb72">31</div>
<div class="t" style="left:766.15px;top:486.82px;font-size:12.5px;font-family:'Liberation Sans',sans-serif;color:#d4ccff;letter-spacing:0.737px;">13 octobre</div>
<div class="t" style="left:674.00px;top:504.63px;font-size:16.5px;font-family:'Liberation Sans',sans-serif;color:#f0edff;letter-spacing:2.074px;">exposition de photographie</div>
<div class="t" style="left:369.00px;top:527.11px;font-size:17px;font-family:'Liberation Sans',sans-serif;color:rgba(255,255,255,0.72);letter-spacing:1.200px;">novembre</div>
<div class="c" style="left:467px;top:527px;width:23px;height:23px"></div>
<div class="n" style="left:467px;top:530.0px;width:23px;color:#2fbb72">1</div>
<div class="c" style="left:491px;top:527px;width:23px;height:23px"></div>
<div class="n" style="left:491px;top:530.0px;width:23px;color:#2fbb72">2</div>
<div class="c" style="left:515px;top:527px;width:24px;height:23px"></div>
<div class="n" style="left:515px;top:530.0px;width:24px;color:#2fbb72">3</div>
<div class="c" style="left:540px;top:527px;width:23px;height:23px"></div>
<div class="n" style="left:540px;top:530.0px;width:23px;color:#2fbb72">4</div>
<div class="c" style="left:564px;top:527px;width:23px;height:23px"></div>
<div class="n" style="left:564px;top:530.0px;width:23px;color:#2fbb72">5</div>
<div class="c" style="left:588px;top:527px;width:23px;height:23px"></div>
<div class="n" style="left:588px;top:530.0px;width:23px;color:#2fbb72">6</div>
<div class="c" style="left:612px;top:527px;width:23px;height:23px"></div>
<div class="n" style="left:612px;top:530.0px;width:23px;color:#2fbb72">7</div>
<div class="c" style="left:636px;top:527px;width:24px;height:23px"></div>
<div class="n" style="left:636px;top:530.0px;width:24px;color:#2fbb72">8</div>
<div class="c" style="left:661px;top:527px;width:23px;height:23px"></div>
<div class="n" style="left:661px;top:530.0px;width:23px;color:#2fbb72">9</div>
<div class="c" style="left:685px;top:527px;width:29px;height:23px"></div>
<div class="n" style="left:685px;top:530.0px;width:29px;color:#2fbb72">10</div>
<div class="c" style="left:715px;top:527px;width:29px;height:23px"></div>
<div class="n" style="left:715px;top:530.0px;width:29px;color:#2fbb72">11</div>
<div class="c" style="left:745px;top:527px;width:29px;height:23px"></div>
<div class="n" style="left:745px;top:530.0px;width:29px;color:#2fbb72">12</div>
<div class="c" style="left:775px;top:527px;width:30px;height:23px"></div>
<div class="n" style="left:775px;top:530.0px;width:30px;color:#2fbb72">13</div>
<div class="c" style="left:806px;top:527px;width:29px;height:23px"></div>
<div class="n" style="left:806px;top:530.0px;width:29px;color:#2fbb72">14</div>
<div class="c" style="left:836px;top:527px;width:29px;height:23px"></div>
<div class="n" style="left:836px;top:530.0px;width:29px;color:#2fbb72">15</div>
<div class="c" style="left:866px;top:527px;width:29px;height:23px"></div>
<div class="n" style="left:866px;top:530.0px;width:29px;color:#2fbb72">16</div>
<div class="c" style="left:896px;top:527px;width:29px;height:23px"></div>
<div class="n" style="left:896px;top:530.0px;width:29px;color:#2fbb72">17</div>
<div class="c" style="left:926px;top:527px;width:30px;height:23px"></div>
<div class="n" style="left:926px;top:530.0px;width:30px;color:#2fbb72">18</div>
<div class="c" style="left:957px;top:527px;width:29px;height:23px"></div>
<div class="n" style="left:957px;top:530.0px;width:29px;color:#2fbb72">19</div>
<div class="c" style="left:987px;top:527px;width:28px;height:23px"></div>
<div class="n" style="left:987px;top:530.0px;width:28px;color:#2fbb72">20</div>
<div class="c" style="left:1016px;top:527px;width:30px;height:23px"></div>
<div class="n" style="left:1016px;top:530.0px;width:30px;color:#2fbb72">21</div>
<div class="c" style="left:1047px;top:527px;width:30px;height:23px"></div>
<div class="n" style="left:1047px;top:530.0px;width:30px;color:#2fbb72">22</div>
<div class="c" style="left:1078px;top:527px;width:29px;height:23px"></div>
<div class="n" style="left:1078px;top:530.0px;width:29px;color:#2fbb72">23</div>
<div class="c" style="left:1108px;top:527px;width:29px;height:23px"></div>
<div class="n" style="left:1108px;top:530.0px;width:29px;color:#2fbb72">24</div>
<div class="c" style="left:1138px;top:527px;width:29px;height:23px"></div>
<div class="n" style="left:1138px;top:530.0px;width:29px;color:#2fbb72">25</div>
<div class="c" style="left:1168px;top:527px;width:30px;height:23px"></div>
<div class="n" style="left:1168px;top:530.0px;width:30px;color:#2fbb72">26</div>
<div class="c" style="left:1199px;top:527px;width:29px;height:23px"></div>
<div class="n" style="left:1199px;top:530.0px;width:29px;color:#2fbb72">27</div>
<div class="c" style="left:1229px;top:527px;width:29px;height:23px"></div>
<div class="n" style="left:1229px;top:530.0px;width:29px;color:#2fbb72">28</div>
<div class="c" style="left:1259px;top:527px;width:30px;height:23px"></div>
<div class="n" style="left:1259px;top:530.0px;width:30px;color:#2fbb72">29</div>
<div class="c" style="left:1290px;top:527px;width:28px;height:23px"></div>
<div class="n" style="left:1290px;top:530.0px;width:28px;color:#2fbb72">30</div>
<div class="c" style="left:1319px;top:527px;width:29px;height:23px"></div>
<div class="n" style="left:1319px;top:530.0px;width:29px;color:#2fbb72">31</div>
<div class="t" style="left:366.60px;top:551.61px;font-size:17px;font-family:'Liberation Sans',sans-serif;color:rgba(255,255,255,0.72);letter-spacing:1.200px;">décembre</div>
<div class="c" style="left:462px;top:551px;width:17px;height:41px"></div>
<div class="n" style="left:462px;top:554.0px;width:17px;color:#2fbb72">1</div>
<div class="c" style="left:480px;top:551px;width:18px;height:41px"></div>
<div class="n" style="left:480px;top:554.0px;width:18px;color:#2fbb72">2</div>
<div class="c" style="left:499px;top:551px;width:17px;height:41px"></div>
<div class="n" style="left:499px;top:554.0px;width:17px;color:#2fbb72">3</div>
<div class="c" style="left:517px;top:551px;width:19px;height:41px"></div>
<div class="n" style="left:517px;top:554.0px;width:19px;color:#2fbb72">4</div>
<div class="c" style="left:537px;top:551px;width:17px;height:41px"></div>
<div class="n" style="left:537px;top:554.0px;width:17px;color:#2fbb72">5</div>
<div class="c" style="left:555px;top:551px;width:18px;height:41px"></div>
<div class="n" style="left:555px;top:554.0px;width:18px;color:#2fbb72">6</div>
<div class="c" style="left:574px;top:551px;width:18px;height:41px"></div>
<div class="n" style="left:574px;top:554.0px;width:18px;color:#2fbb72">7</div>
<div class="c" style="left:593px;top:551px;width:18px;height:41px"></div>
<div class="n" style="left:593px;top:554.0px;width:18px;color:#2fbb72">8</div>
<div class="c" style="left:612px;top:551px;width:18px;height:41px"></div>
<div class="n" style="left:612px;top:554.0px;width:18px;color:#2fbb72">9</div>
<div class="c" style="left:631px;top:551px;width:23px;height:41px"></div>
<div class="n" style="left:631px;top:554.0px;width:23px;color:#2fbb72">10</div>
<div class="c" style="left:655px;top:551px;width:24px;height:41px"></div>
<div class="n" style="left:655px;top:554.0px;width:24px;color:#2fbb72">11</div>
<div class="c" style="left:680px;top:551px;width:24px;height:41px"></div>
<div class="n" style="left:680px;top:554.0px;width:24px;color:#2fbb72">12</div>
<div class="c" style="left:705px;top:551px;width:24px;height:41px"></div>
<div class="n" style="left:705px;top:554.0px;width:24px;color:#2fbb72">13</div>
<div class="c" style="left:730px;top:551px;width:23px;height:41px"></div>
<div class="n" style="left:730px;top:554.0px;width:23px;color:#2fbb72">14</div>
<div class="c" style="left:754px;top:551px;width:24px;height:41px"></div>
<div class="n" style="left:754px;top:554.0px;width:24px;color:#2fbb72">15</div>
<div class="c" style="left:779px;top:551px;width:24px;height:41px"></div>
<div class="n" style="left:779px;top:554.0px;width:24px;color:#2fbb72">16</div>
<div class="c" style="left:804px;top:551px;width:24px;height:41px"></div>
<div class="n" style="left:804px;top:554.0px;width:24px;color:#2fbb72">17</div>
<div class="c" style="left:829px;top:551px;width:24px;height:41px"></div>
<div class="n" style="left:829px;top:554.0px;width:24px;color:#2fbb72">18</div>
<div class="c" style="left:854px;top:551px;width:24px;height:41px"></div>
<div class="n" style="left:854px;top:554.0px;width:24px;color:#2fbb72">19</div>
<div style="position:absolute;left:879px;top:551px;width:197px;height:41px;background:#4b1fe3;"></div>
<div class="c" style="left:1077px;top:551px;width:24px;height:41px"></div>
<div class="n" style="left:1077px;top:554.0px;width:24px;color:#2fbb72">21</div>
<div class="c" style="left:1102px;top:551px;width:24px;height:41px"></div>
<div class="n" style="left:1102px;top:554.0px;width:24px;color:#2fbb72">22</div>
<div class="c" style="left:1127px;top:551px;width:23px;height:41px"></div>
<div class="n" style="left:1127px;top:554.0px;width:23px;color:#2fbb72">23</div>
<div class="c" style="left:1151px;top:551px;width:25px;height:41px"></div>
<div class="n" style="left:1151px;top:554.0px;width:25px;color:#2fbb72">24</div>
<div class="c" style="left:1177px;top:551px;width:23px;height:41px"></div>
<div class="n" style="left:1177px;top:554.0px;width:23px;color:#2fbb72">25</div>
<div class="c" style="left:1201px;top:551px;width:24px;height:41px"></div>
<div class="n" style="left:1201px;top:554.0px;width:24px;color:#2fbb72">26</div>
<div class="c" style="left:1226px;top:551px;width:24px;height:41px"></div>
<div class="n" style="left:1226px;top:554.0px;width:24px;color:#2fbb72">27</div>
<div class="c" style="left:1251px;top:551px;width:23px;height:41px"></div>
<div class="n" style="left:1251px;top:554.0px;width:23px;color:#2fbb72">28</div>
<div class="c" style="left:1275px;top:551px;width:24px;height:41px"></div>
<div class="n" style="left:1275px;top:554.0px;width:24px;color:#2fbb72">29</div>
<div class="c" style="left:1300px;top:551px;width:24px;height:41px"></div>
<div class="n" style="left:1300px;top:554.0px;width:24px;color:#2fbb72">30</div>
<div class="c" style="left:1325px;top:551px;width:23px;height:41px"></div>
<div class="n" style="left:1325px;top:554.0px;width:23px;color:#2fbb72">31</div>
<div class="t" style="left:937.20px;top:553.82px;font-size:12.5px;font-family:'Liberation Sans',sans-serif;color:#d4ccff;letter-spacing:0.764px;">20 décembre</div>
<div class="t" style="left:895.55px;top:571.63px;font-size:16.5px;font-family:'Liberation Sans',sans-serif;color:#f0edff;letter-spacing:1.765px;">Festival Pitchouns</div>
<div style="position:absolute;left:436px;top:184px;width:366px;height:4px;background:#4b1fe3;"></div>
<div style="position:absolute;left:802px;top:165px;width:34px;height:19px;border-right:4px solid #4b1fe3;border-bottom:4px solid #4b1fe3;border-bottom-right-radius:22px;"></div>
<div style="position:absolute;left:841px;top:165px;width:34px;height:19px;border-right:4px solid #4b1fe3;border-bottom:4px solid #4b1fe3;border-bottom-right-radius:22px;"></div>
<div style="position:absolute;left:1009px;top:232px;width:29px;height:38px;border-right:4px solid #4b1fe3;border-bottom:4px solid #4b1fe3;border-bottom-right-radius:28px 36px;"></div>
<div style="position:absolute;left:1208px;top:340px;width:140px;height:4px;background:#4b1fe3;"></div>
<div style="position:absolute;left:409px;top:364px;width:799px;height:4px;background:#4b1fe3;"></div>
<div style="position:absolute;left:1208px;top:345px;width:31px;height:19px;border-right:4px solid #4b1fe3;border-bottom:4px solid #4b1fe3;border-bottom-right-radius:22px;"></div>
<div style="position:absolute;left:466px;top:481px;width:825px;height:2px;background:repeating-linear-gradient(to right,#f15d24 0 6px,transparent 6px 12px);"></div>
<div style="position:absolute;left:1291px;top:460px;width:30px;height:21px;border-right:2px dashed #f15d24;border-bottom:2px dashed #f15d24;border-bottom-right-radius:22px;"></div>
<div style="position:absolute;left:356px;top:593px;width:992px;height:21px;background:#1ab665;"></div>
<div class="t" style="left:355px;width:993px;text-align:center;top:593.91px;font-size:17px;color:#eefaf2;letter-spacing:1.6px;">2019</div>
<div class="t" style="left:367.00px;top:614.61px;font-size:17px;font-family:'Liberation Sans',sans-serif;color:rgba(255,255,255,0.72);letter-spacing:1.487px;">janvier</div>
<div class="c" style="left:437px;top:614px;width:28px;height:23px"></div>
<div class="c" style="left:436px;top:614px;width:1px;height:23px;background:#4b1fe3"></div>
<div class="n" style="left:437px;top:617.0px;width:28px;color:#5533e6">1</div>
<div class="c" style="left:466px;top:614px;width:28px;height:23px"></div>
<div class="c" style="left:465px;top:614px;width:1px;height:23px;background:#4b1fe3"></div>
<div class="n" style="left:466px;top:617.0px;width:28px;color:#5533e6">2</div>
<div class="c" style="left:495px;top:614px;width:29px;height:23px"></div>
<div class="c" style="left:494px;top:614px;width:1px;height:23px;background:#4b1fe3"></div>
<div class="n" style="left:495px;top:617.0px;width:29px;color:#5533e6">3</div>
<div class="c" style="left:525px;top:614px;width:27px;height:23px"></div>
<div class="c" style="left:524px;top:614px;width:1px;height:23px;background:#4b1fe3"></div>
<div class="n" style="left:525px;top:617.0px;width:27px;color:#5533e6">4</div>
<div class="c" style="left:553px;top:614px;width:28px;height:23px"></div>
<div class="c" style="left:552px;top:614px;width:1px;height:23px;background:#4b1fe3"></div>
<div class="n" style="left:553px;top:617.0px;width:28px;color:#5533e6">5</div>
<div class="c" style="left:582px;top:614px;width:28px;height:23px"></div>
<div class="c" style="left:581px;top:614px;width:1px;height:23px;background:#4b1fe3"></div>
<div class="n" style="left:582px;top:617.0px;width:28px;color:#5533e6">6</div>
<div class="c" style="left:611px;top:614px;width:28px;height:23px"></div>
<div class="c" style="left:610px;top:614px;width:1px;height:23px;background:#4b1fe3"></div>
<div class="n" style="left:611px;top:617.0px;width:28px;color:#5533e6">7</div>
<div class="c" style="left:640px;top:614px;width:28px;height:23px"></div>
<div class="c" style="left:639px;top:614px;width:1px;height:23px;background:#4b1fe3"></div>
<div class="n" style="left:640px;top:617.0px;width:28px;color:#5533e6">8</div>
<div class="c" style="left:669px;top:614px;width:28px;height:23px"></div>
<div class="c" style="left:668px;top:614px;width:1px;height:23px;background:#4b1fe3"></div>
<div class="n" style="left:669px;top:617.0px;width:28px;color:#5533e6">9</div>
<div class="c" style="left:698px;top:614px;width:34px;height:23px"></div>
<div class="c" style="left:697px;top:614px;width:1px;height:23px;background:#4b1fe3"></div>
<div class="n" style="left:698px;top:617.0px;width:34px;color:#5533e6">10</div>
<div class="c" style="left:733px;top:614px;width:34px;height:23px"></div>
<div class="c" style="left:732px;top:614px;width:1px;height:23px;background:#4b1fe3"></div>
<div class="n" style="left:733px;top:617.0px;width:34px;color:#5533e6">11</div>
<div class="c" style="left:768px;top:614px;width:34px;height:23px"></div>
<div class="c" style="left:767px;top:614px;width:1px;height:23px;background:#4b1fe3"></div>
<div class="n" style="left:768px;top:617.0px;width:34px;color:#5533e6">12</div>
<div class="c" style="left:803px;top:614px;width:37px;height:23px"></div>
<div class="c" style="left:802px;top:614px;width:1px;height:23px;background:#4b1fe3"></div>
<div class="n" style="left:803px;top:617.0px;width:37px;color:#5533e6">13</div>
<div class="c" style="left:841px;top:614px;width:38px;height:23px"></div>
<div class="c" style="left:840px;top:614px;width:1px;height:23px;background:#4b1fe3"></div>
<div class="n" style="left:841px;top:617.0px;width:38px;color:#5533e6">14</div>
<div class="c" style="left:880px;top:614px;width:27px;height:23px"></div>
<div class="n" style="left:880px;top:617.0px;width:27px;color:#2fbb72">15</div>
<div class="c" style="left:908px;top:614px;width:26px;height:23px"></div>
<div class="n" style="left:908px;top:617.0px;width:26px;color:#2fbb72">16</div>
<div class="c" style="left:935px;top:614px;width:27px;height:23px"></div>
<div class="n" style="left:935px;top:617.0px;width:27px;color:#2fbb72">17</div>
<div class="c" style="left:963px;top:614px;width:27px;height:23px"></div>
<div class="n" style="left:963px;top:617.0px;width:27px;color:#2fbb72">18</div>
<div class="c" style="left:991px;top:614px;width:26px;height:23px"></div>
<div class="n" style="left:991px;top:617.0px;width:26px;color:#2fbb72">19</div>
<div class="c" style="left:1018px;top:614px;width:27px;height:23px"></div>
<div class="n" style="left:1018px;top:617.0px;width:27px;color:#2fbb72">20</div>
<div class="c" style="left:1046px;top:614px;width:26px;height:23px"></div>
<div class="n" style="left:1046px;top:617.0px;width:26px;color:#2fbb72">21</div>
<div class="c" style="left:1073px;top:614px;width:27px;height:23px"></div>
<div class="n" style="left:1073px;top:617.0px;width:27px;color:#2fbb72">22</div>
<div class="c" style="left:1101px;top:614px;width:27px;height:23px"></div>
<div class="n" style="left:1101px;top:617.0px;width:27px;color:#2fbb72">23</div>
<div class="c" style="left:1129px;top:614px;width:26px;height:23px"></div>
<div class="n" style="left:1129px;top:617.0px;width:26px;color:#2fbb72">24</div>
<div class="c" style="left:1156px;top:614px;width:26px;height:23px"></div>
<div class="n" style="left:1156px;top:617.0px;width:26px;color:#2fbb72">25</div>
<div class="c" style="left:1183px;top:614px;width:28px;height:23px"></div>
<div class="n" style="left:1183px;top:617.0px;width:28px;color:#2fbb72">26</div>
<div class="c" style="left:1212px;top:614px;width:27px;height:23px"></div>
<div class="n" style="left:1212px;top:617.0px;width:27px;color:#2fbb72">27</div>
<div class="c" style="left:1240px;top:614px;width:26px;height:23px"></div>
<div class="n" style="left:1240px;top:617.0px;width:26px;color:#2fbb72">28</div>
<div class="c" style="left:1267px;top:614px;width:27px;height:23px"></div>
<div class="n" style="left:1267px;top:617.0px;width:27px;color:#2fbb72">29</div>
<div class="c" style="left:1295px;top:614px;width:26px;height:23px"></div>
<div class="n" style="left:1295px;top:617.0px;width:26px;color:#2fbb72">30</div>
<div class="c" style="left:1322px;top:614px;width:26px;height:23px"></div>
<div class="n" style="left:1322px;top:617.0px;width:26px;color:#2fbb72">31</div>
<div class="t" style="left:367.10px;top:638.81px;font-size:17px;font-family:'Liberation Sans',sans-serif;color:rgba(255,255,255,0.72);letter-spacing:1.344px;">février</div>
<div class="c" style="left:434px;top:638px;width:19px;height:42px"></div>
<div class="n" style="left:434px;top:641.0px;width:19px;color:#2fbb72">1</div>
<div class="c" style="left:454px;top:638px;width:18px;height:42px"></div>
<div class="n" style="left:454px;top:641.0px;width:18px;color:#2fbb72">2</div>
<div class="c" style="left:473px;top:638px;width:19px;height:42px"></div>
<div class="n" style="left:473px;top:641.0px;width:19px;color:#2fbb72">3</div>
<div class="c" style="left:493px;top:638px;width:19px;height:42px"></div>
<div class="n" style="left:493px;top:641.0px;width:19px;color:#2fbb72">4</div>
<div class="c" style="left:513px;top:638px;width:19px;height:42px"></div>
<div class="n" style="left:513px;top:641.0px;width:19px;color:#2fbb72">5</div>
<div class="c" style="left:533px;top:638px;width:19px;height:42px"></div>
<div class="n" style="left:533px;top:641.0px;width:19px;color:#2fbb72">6</div>
<div class="c" style="left:553px;top:638px;width:19px;height:42px"></div>
<div class="n" style="left:553px;top:641.0px;width:19px;color:#2fbb72">7</div>
<div class="c" style="left:573px;top:638px;width:20px;height:42px"></div>
<div class="n" style="left:573px;top:641.0px;width:20px;color:#2fbb72">8</div>
<div class="c" style="left:594px;top:638px;width:19px;height:42px"></div>
<div class="n" style="left:594px;top:641.0px;width:19px;color:#2fbb72">9</div>
<div class="c" style="left:614px;top:638px;width:26px;height:42px"></div>
<div class="n" style="left:614px;top:641.0px;width:26px;color:#2fbb72">10</div>
<div style="position:absolute;left:641px;top:638px;width:186px;height:42px;background:#4b1fe3;"></div>
<div class="c" style="left:828px;top:638px;width:26px;height:42px"></div>
<div class="n" style="left:828px;top:641.0px;width:26px;color:#2fbb72">12</div>
<div class="c" style="left:855px;top:638px;width:25px;height:42px"></div>
<div class="n" style="left:855px;top:641.0px;width:25px;color:#2fbb72">13</div>
<div class="c" style="left:881px;top:638px;width:25px;height:42px"></div>
<div class="n" style="left:881px;top:641.0px;width:25px;color:#2fbb72">14</div>
<div class="c" style="left:907px;top:638px;width:25px;height:42px"></div>
<div class="n" style="left:907px;top:641.0px;width:25px;color:#2fbb72">15</div>
<div class="c" style="left:933px;top:638px;width:25px;height:42px"></div>
<div class="n" style="left:933px;top:641.0px;width:25px;color:#2fbb72">16</div>
<div class="c" style="left:959px;top:638px;width:25px;height:42px"></div>
<div class="n" style="left:959px;top:641.0px;width:25px;color:#2fbb72">17</div>
<div class="c" style="left:985px;top:638px;width:25px;height:42px"></div>
<div class="n" style="left:985px;top:641.0px;width:25px;color:#2fbb72">18</div>
<div class="c" style="left:1011px;top:638px;width:24px;height:42px"></div>
<div class="n" style="left:1011px;top:641.0px;width:24px;color:#2fbb72">19</div>
<div class="c" style="left:1036px;top:638px;width:26px;height:42px"></div>
<div class="n" style="left:1036px;top:641.0px;width:26px;color:#2fbb72">20</div>
<div class="c" style="left:1063px;top:638px;width:25px;height:42px"></div>
<div class="n" style="left:1063px;top:641.0px;width:25px;color:#2fbb72">21</div>
<div class="c" style="left:1089px;top:638px;width:25px;height:42px"></div>
<div class="n" style="left:1089px;top:641.0px;width:25px;color:#2fbb72">22</div>
<div class="c" style="left:1115px;top:638px;width:25px;height:42px"></div>
<div class="n" style="left:1115px;top:641.0px;width:25px;color:#2fbb72">23</div>
<div class="c" style="left:1141px;top:638px;width:25px;height:42px"></div>
<div class="n" style="left:1141px;top:641.0px;width:25px;color:#2fbb72">24</div>
<div class="c" style="left:1167px;top:638px;width:25px;height:42px"></div>
<div class="n" style="left:1167px;top:641.0px;width:25px;color:#2fbb72">25</div>
<div class="c" style="left:1193px;top:638px;width:25px;height:42px"></div>
<div class="n" style="left:1193px;top:641.0px;width:25px;color:#2fbb72">26</div>
<div class="c" style="left:1219px;top:638px;width:26px;height:42px"></div>
<div class="n" style="left:1219px;top:641.0px;width:26px;color:#2fbb72">27</div>
<div class="c" style="left:1246px;top:638px;width:25px;height:42px"></div>
<div class="n" style="left:1246px;top:641.0px;width:25px;color:#2fbb72">28</div>
<div class="c" style="left:1272px;top:638px;width:25px;height:42px"></div>
<div class="n" style="left:1272px;top:641.0px;width:25px;color:#2fbb72">29</div>
<div class="c" style="left:1298px;top:638px;width:25px;height:42px"></div>
<div class="n" style="left:1298px;top:641.0px;width:25px;color:#2fbb72">30</div>
<div class="c" style="left:1324px;top:638px;width:24px;height:42px"></div>
<div class="n" style="left:1324px;top:641.0px;width:24px;color:#2fbb72">31</div>
<div class="t" style="left:704.80px;top:640.82px;font-size:12.5px;font-family:'Liberation Sans',sans-serif;color:#d4ccff;letter-spacing:0.802px;">11 février</div>
<div class="t" style="left:657.90px;top:658.63px;font-size:16.5px;font-family:'Liberation Sans',sans-serif;color:#f0edff;letter-spacing:1.774px;">Alain Capeillères</div>
<div class="t" style="left:366.00px;top:682.21px;font-size:17px;font-family:'Liberation Sans',sans-serif;color:rgba(255,255,255,0.72);letter-spacing:1.674px;">mars</div>
<div class="c" style="left:420px;top:681px;width:16px;height:42px"></div>
<div class="n" style="left:420px;top:684.0px;width:16px;color:#2fbb72">1</div>
<div class="c" style="left:437px;top:681px;width:16px;height:42px"></div>
<div class="n" style="left:437px;top:684.0px;width:16px;color:#2fbb72">2</div>
<div class="c" style="left:454px;top:681px;width:18px;height:42px"></div>
<div class="n" style="left:454px;top:684.0px;width:18px;color:#2fbb72">3</div>
<div class="c" style="left:473px;top:681px;width:16px;height:42px"></div>
<div class="n" style="left:473px;top:684.0px;width:16px;color:#2fbb72">4</div>
<div class="c" style="left:490px;top:681px;width:16px;height:42px"></div>
<div class="n" style="left:490px;top:684.0px;width:16px;color:#2fbb72">5</div>
<div class="c" style="left:507px;top:681px;width:17px;height:42px"></div>
<div class="n" style="left:507px;top:684.0px;width:17px;color:#2fbb72">6</div>
<div class="c" style="left:525px;top:681px;width:17px;height:42px"></div>
<div class="n" style="left:525px;top:684.0px;width:17px;color:#2fbb72">7</div>
<div class="c" style="left:543px;top:681px;width:17px;height:42px"></div>
<div class="n" style="left:543px;top:684.0px;width:17px;color:#2fbb72">8</div>
<div class="c" style="left:561px;top:681px;width:16px;height:42px"></div>
<div class="n" style="left:561px;top:684.0px;width:16px;color:#2fbb72">9</div>
<div class="c" style="left:578px;top:681px;width:22px;height:42px"></div>
<div class="n" style="left:578px;top:684.0px;width:22px;color:#2fbb72">10</div>
<div class="c" style="left:601px;top:681px;width:23px;height:42px"></div>
<div class="n" style="left:601px;top:684.0px;width:23px;color:#2fbb72">11</div>
<div class="c" style="left:625px;top:681px;width:22px;height:42px"></div>
<div class="n" style="left:625px;top:684.0px;width:22px;color:#2fbb72">12</div>
<div class="c" style="left:648px;top:681px;width:24px;height:42px"></div>
<div class="n" style="left:648px;top:684.0px;width:24px;color:#2fbb72">13</div>
<div class="c" style="left:673px;top:681px;width:21px;height:42px"></div>
<div class="n" style="left:673px;top:684.0px;width:21px;color:#2fbb72">14</div>
<div class="c" style="left:695px;top:681px;width:24px;height:42px"></div>
<div class="n" style="left:695px;top:684.0px;width:24px;color:#2fbb72">15</div>
<div class="c" style="left:720px;top:681px;width:22px;height:42px"></div>
<div class="n" style="left:720px;top:684.0px;width:22px;color:#2fbb72">16</div>
<div style="position:absolute;left:743px;top:681px;width:266px;height:42px;background:#f15d24;"></div>
<div class="c" style="left:1010px;top:681px;width:32px;height:42px"></div>
<div class="c" style="left:1009px;top:681px;width:1px;height:42px;background:#4b1fe3"></div>
<div class="n" style="left:1010px;top:684.0px;width:32px;color:#5533e6">18</div>
<div class="c" style="left:1043px;top:681px;width:23px;height:42px"></div>
<div class="n" style="left:1043px;top:684.0px;width:23px;color:#2fbb72">19</div>
<div class="c" style="left:1067px;top:681px;width:22px;height:42px"></div>
<div class="n" style="left:1067px;top:684.0px;width:22px;color:#2fbb72">20</div>
<div class="c" style="left:1090px;top:681px;width:22px;height:42px"></div>
<div class="n" style="left:1090px;top:684.0px;width:22px;color:#2fbb72">21</div>
<div class="c" style="left:1113px;top:681px;width:24px;height:42px"></div>
<div class="n" style="left:1113px;top:684.0px;width:24px;color:#2fbb72">22</div>
<div class="c" style="left:1138px;top:681px;width:22px;height:42px"></div>
<div class="n" style="left:1138px;top:684.0px;width:22px;color:#2fbb72">23</div>
<div class="c" style="left:1161px;top:681px;width:23px;height:42px"></div>
<div class="n" style="left:1161px;top:684.0px;width:23px;color:#2fbb72">24</div>
<div class="c" style="left:1185px;top:681px;width:22px;height:42px"></div>
<div class="n" style="left:1185px;top:684.0px;width:22px;color:#2fbb72">25</div>
<div class="c" style="left:1208px;top:681px;width:22px;height:42px"></div>
<div class="n" style="left:1208px;top:684.0px;width:22px;color:#2fbb72">26</div>
<div class="c" style="left:1231px;top:681px;width:23px;height:42px"></div>
<div class="n" style="left:1231px;top:684.0px;width:23px;color:#2fbb72">27</div>
<div class="c" style="left:1255px;top:681px;width:23px;height:42px"></div>
<div class="n" style="left:1255px;top:684.0px;width:23px;color:#2fbb72">28</div>
<div class="c" style="left:1279px;top:681px;width:22px;height:42px"></div>
<div class="n" style="left:1279px;top:684.0px;width:22px;color:#2fbb72">29</div>
<div class="c" style="left:1302px;top:681px;width:22px;height:42px"></div>
<div class="n" style="left:1302px;top:684.0px;width:22px;color:#2fbb72">30</div>
<div class="c" style="left:1325px;top:681px;width:23px;height:42px"></div>
<div class="n" style="left:1325px;top:684.0px;width:23px;color:#2fbb72">31</div>
<div class="t" style="left:851.00px;top:683.82px;font-size:12.5px;font-family:'Liberation Sans',sans-serif;color:#ffe3d3;letter-spacing:0.807px;">17 mars</div>
<div class="t" style="left:758.85px;top:701.63px;font-size:16.5px;font-family:'Liberation Sans',sans-serif;color:#fff1e8;letter-spacing:1.990px;">Week–end du chêne liège</div>
<div class="t" style="left:366.00px;top:724.51px;font-size:17px;font-family:'Liberation Sans',sans-serif;color:rgba(255,255,255,0.72);letter-spacing:0.957px;">avril</div>
<div class="c" style="left:411px;top:724px;width:16px;height:69px"></div>
<div class="n" style="left:411px;top:727.0px;width:16px;color:#2fbb72">1</div>
<div class="c" style="left:428px;top:724px;width:16px;height:69px"></div>
<div class="n" style="left:428px;top:727.0px;width:16px;color:#2fbb72">2</div>
<div class="c" style="left:445px;top:724px;width:17px;height:69px"></div>
<div class="n" style="left:445px;top:727.0px;width:17px;color:#2fbb72">3</div>
<div class="c" style="left:463px;top:724px;width:15px;height:69px"></div>
<div class="n" style="left:463px;top:727.0px;width:15px;color:#2fbb72">4</div>
<div class="c" style="left:479px;top:724px;width:17px;height:69px"></div>
<div class="n" style="left:479px;top:727.0px;width:17px;color:#2fbb72">5</div>
<div class="c" style="left:497px;top:724px;width:17px;height:69px"></div>
<div class="n" style="left:497px;top:727.0px;width:17px;color:#2fbb72">6</div>
<div class="c" style="left:515px;top:724px;width:15px;height:69px"></div>
<div class="n" style="left:515px;top:727.0px;width:15px;color:#2fbb72">7</div>
<div class="c" style="left:531px;top:724px;width:16px;height:69px"></div>
<div class="n" style="left:531px;top:727.0px;width:16px;color:#2fbb72">8</div>
<div class="c" style="left:548px;top:724px;width:16px;height:69px"></div>
<div class="n" style="left:548px;top:727.0px;width:16px;color:#2fbb72">9</div>
<div class="c" style="left:565px;top:724px;width:23px;height:69px"></div>
<div class="n" style="left:565px;top:727.0px;width:23px;color:#2fbb72">10</div>
<div class="c" style="left:589px;top:724px;width:21px;height:69px"></div>
<div class="n" style="left:589px;top:727.0px;width:21px;color:#2fbb72">11</div>
<div class="c" style="left:611px;top:724px;width:22px;height:69px"></div>
<div class="n" style="left:611px;top:727.0px;width:22px;color:#2fbb72">12</div>
<div class="c" style="left:634px;top:724px;width:23px;height:69px"></div>
<div class="n" style="left:634px;top:727.0px;width:23px;color:#2fbb72">13</div>
<div class="c" style="left:658px;top:724px;width:23px;height:69px"></div>
<div class="n" style="left:658px;top:727.0px;width:23px;color:#2fbb72">14</div>
<div class="c" style="left:682px;top:724px;width:22px;height:69px"></div>
<div class="n" style="left:682px;top:727.0px;width:22px;color:#2fbb72">15</div>
<div class="c" style="left:705px;top:724px;width:22px;height:69px"></div>
<div class="n" style="left:705px;top:727.0px;width:22px;color:#2fbb72">16</div>
<div class="c" style="left:728px;top:724px;width:22px;height:69px"></div>
<div class="n" style="left:728px;top:727.0px;width:22px;color:#2fbb72">17</div>
<div class="c" style="left:751px;top:724px;width:21px;height:69px"></div>
<div class="n" style="left:751px;top:727.0px;width:21px;color:#2fbb72">18</div>
<div class="c" style="left:773px;top:724px;width:22px;height:69px"></div>
<div class="n" style="left:773px;top:727.0px;width:22px;color:#2fbb72">19</div>
<div class="c" style="left:796px;top:724px;width:22px;height:69px"></div>
<div class="n" style="left:796px;top:727.0px;width:22px;color:#2fbb72">20</div>
<div class="c" style="left:819px;top:724px;width:23px;height:69px"></div>
<div class="n" style="left:819px;top:727.0px;width:23px;color:#2fbb72">21</div>
<div class="c" style="left:843px;top:724px;width:23px;height:69px"></div>
<div class="n" style="left:843px;top:727.0px;width:23px;color:#2fbb72">22</div>
<div class="c" style="left:867px;top:724px;width:21px;height:69px"></div>
<div class="n" style="left:867px;top:727.0px;width:21px;color:#2fbb72">23</div>
<div class="c" style="left:889px;top:724px;width:22px;height:69px"></div>
<div class="n" style="left:889px;top:727.0px;width:22px;color:#2fbb72">24</div>
<div class="c" style="left:912px;top:724px;width:23px;height:69px"></div>
<div class="n" style="left:912px;top:727.0px;width:23px;color:#2fbb72">25</div>
<div style="position:absolute;left:936px;top:724px;width:272px;height:69px;background:#4b1fe3;"></div>
<div class="c" style="left:1209px;top:724px;width:26px;height:69px"></div>
<div class="c" style="left:1208px;top:724px;width:1px;height:69px;background:#4b1fe3"></div>
<div class="n" style="left:1209px;top:727.0px;width:26px;color:#5533e6">27</div>
<div class="c" style="left:1236px;top:724px;width:27px;height:69px"></div>
<div class="c" style="left:1235px;top:724px;width:1px;height:69px;background:#4b1fe3"></div>
<div class="n" style="left:1236px;top:727.0px;width:27px;color:#5533e6">28</div>
<div class="c" style="left:1264px;top:724px;width:29px;height:69px"></div>
<div class="c" style="left:1263px;top:724px;width:1px;height:69px;background:#4b1fe3"></div>
<div class="n" style="left:1264px;top:727.0px;width:29px;color:#5533e6">29</div>
<div class="c" style="left:1294px;top:724px;width:26px;height:69px"></div>
<div class="c" style="left:1293px;top:724px;width:1px;height:69px;background:#4b1fe3"></div>
<div class="n" style="left:1294px;top:727.0px;width:26px;color:#5533e6">30</div>
<div class="c" style="left:1321px;top:724px;width:27px;height:69px"></div>
<div class="c" style="left:1320px;top:724px;width:1px;height:69px;background:#4b1fe3"></div>
<div class="n" style="left:1321px;top:727.0px;width:27px;color:#5533e6">31</div>
<div class="t" style="left:1049.60px;top:726.82px;font-size:12.5px;font-family:'Liberation Sans',sans-serif;color:#d4ccff;letter-spacing:0.643px;">26 avril</div>
<div class="t" style="left:955.90px;top:744.23px;font-size:16.5px;font-family:'Liberation Sans',sans-serif;color:#f0edff;letter-spacing:1.913px;">33e Festival International</div>
<div class="t" style="left:960.00px;top:760.73px;font-size:16.5px;font-family:'Liberation Sans',sans-serif;color:#f0edff;letter-spacing:1.483px;">de Mode, Photographie et</div>
<div class="t" style="left:969.00px;top:777.23px;font-size:16.5px;font-family:'Liberation Sans',sans-serif;color:#f0edff;letter-spacing:1.448px;">d'Accessoire de Mode à</div>
<div class="t" style="left:367.30px;top:794.61px;font-size:17px;font-family:'Liberation Sans',sans-serif;color:rgba(255,255,255,0.72);letter-spacing:1.303px;">mai</div>
<div class="c" style="left:410px;top:794px;width:26px;height:23px"></div>
<div class="c" style="left:409px;top:794px;width:1px;height:23px;background:#4b1fe3"></div>
<div class="n" style="left:410px;top:797.0px;width:26px;color:#5533e6">1</div>
<div class="c" style="left:437px;top:794px;width:25px;height:23px"></div>
<div class="c" style="left:436px;top:794px;width:1px;height:23px;background:#4b1fe3"></div>
<div class="n" style="left:437px;top:797.0px;width:25px;color:#5533e6">2</div>
<div class="c" style="left:463px;top:794px;width:26px;height:23px"></div>
<div class="c" style="left:462px;top:794px;width:1px;height:23px;background:#4b1fe3"></div>
<div class="n" style="left:463px;top:797.0px;width:26px;color:#5533e6">3</div>
<div class="c" style="left:490px;top:794px;width:26px;height:23px"></div>
<div class="c" style="left:489px;top:794px;width:1px;height:23px;background:#4b1fe3"></div>
<div class="n" style="left:490px;top:797.0px;width:26px;color:#5533e6">4</div>
<div class="c" style="left:517px;top:794px;width:27px;height:23px"></div>
<div class="c" style="left:516px;top:794px;width:1px;height:23px;background:#4b1fe3"></div>
<div class="n" style="left:517px;top:797.0px;width:27px;color:#5533e6">5</div>
<div class="c" style="left:545px;top:794px;width:25px;height:23px"></div>
<div class="c" style="left:544px;top:794px;width:1px;height:23px;background:#4b1fe3"></div>
<div class="n" style="left:545px;top:797.0px;width:25px;color:#5533e6">6</div>
<div class="c" style="left:571px;top:794px;width:25px;height:23px"></div>
<div class="c" style="left:570px;top:794px;width:1px;height:23px;background:#4b1fe3"></div>
<div class="n" style="left:571px;top:797.0px;width:25px;color:#5533e6">7</div>
<div class="c" style="left:597px;top:794px;width:27px;height:23px"></div>
<div class="c" style="left:596px;top:794px;width:1px;height:23px;background:#4b1fe3"></div>
<div class="n" style="left:597px;top:797.0px;width:27px;color:#5533e6">8</div>
<div class="c" style="left:625px;top:794px;width:25px;height:23px"></div>
<div class="c" style="left:624px;top:794px;width:1px;height:23px;background:#4b1fe3"></div>
<div class="n" style="left:625px;top:797.0px;width:25px;color:#5533e6">9</div>
<div class="c" style="left:651px;top:794px;width:32px;height:23px"></div>
<div class="c" style="left:650px;top:794px;width:1px;height:23px;background:#4b1fe3"></div>
<div class="n" style="left:651px;top:797.0px;width:32px;color:#5533e6">10</div>
<div class="c" style="left:684px;top:794px;width:32px;height:23px"></div>
<div class="c" style="left:683px;top:794px;width:1px;height:23px;background:#4b1fe3"></div>
<div class="n" style="left:684px;top:797.0px;width:32px;color:#5533e6">11</div>
<div class="c" style="left:717px;top:794px;width:31px;height:23px"></div>
<div class="c" style="left:716px;top:794px;width:1px;height:23px;background:#4b1fe3"></div>
<div class="n" style="left:717px;top:797.0px;width:31px;color:#5533e6">12</div>
<div class="c" style="left:749px;top:794px;width:33px;height:23px"></div>
<div class="c" style="left:748px;top:794px;width:1px;height:23px;background:#4b1fe3"></div>
<div class="n" style="left:749px;top:797.0px;width:33px;color:#5533e6">13</div>
<div class="c" style="left:783px;top:794px;width:31px;height:23px"></div>
<div class="c" style="left:782px;top:794px;width:1px;height:23px;background:#4b1fe3"></div>
<div class="n" style="left:783px;top:797.0px;width:31px;color:#5533e6">14</div>
<div class="c" style="left:815px;top:794px;width:32px;height:23px"></div>
<div class="c" style="left:814px;top:794px;width:1px;height:23px;background:#4b1fe3"></div>
<div class="n" style="left:815px;top:797.0px;width:32px;color:#5533e6">15</div>
<div class="c" style="left:848px;top:794px;width:32px;height:23px"></div>
<div class="c" style="left:847px;top:794px;width:1px;height:23px;background:#4b1fe3"></div>
<div class="n" style="left:848px;top:797.0px;width:32px;color:#5533e6">16</div>
<div class="c" style="left:881px;top:794px;width:32px;height:23px"></div>
<div class="c" style="left:880px;top:794px;width:1px;height:23px;background:#4b1fe3"></div>
<div class="n" style="left:881px;top:797.0px;width:32px;color:#5533e6">17</div>
<div class="c" style="left:914px;top:794px;width:31px;height:23px"></div>
<div class="c" style="left:913px;top:794px;width:1px;height:23px;background:#4b1fe3"></div>
<div class="n" style="left:914px;top:797.0px;width:31px;color:#5533e6">18</div>
<div class="c" style="left:946px;top:794px;width:31px;height:23px"></div>
<div class="c" style="left:945px;top:794px;width:1px;height:23px;background:#4b1fe3"></div>
<div class="n" style="left:946px;top:797.0px;width:31px;color:#5533e6">19</div>
<div class="c" style="left:978px;top:794px;width:32px;height:23px"></div>
<div class="c" style="left:977px;top:794px;width:1px;height:23px;background:#4b1fe3"></div>
<div class="n" style="left:978px;top:797.0px;width:32px;color:#5533e6">20</div>
<div class="c" style="left:1011px;top:794px;width:32px;height:23px"></div>
<div class="c" style="left:1010px;top:794px;width:1px;height:23px;background:#4b1fe3"></div>
<div class="n" style="left:1011px;top:797.0px;width:32px;color:#5533e6">21</div>
<div class="c" style="left:1044px;top:794px;width:32px;height:23px"></div>
<div class="c" style="left:1043px;top:794px;width:1px;height:23px;background:#4b1fe3"></div>
<div class="n" style="left:1044px;top:797.0px;width:32px;color:#5533e6">22</div>
<div class="c" style="left:1077px;top:794px;width:31px;height:23px"></div>
<div class="c" style="left:1076px;top:794px;width:1px;height:23px;background:#4b1fe3"></div>
<div class="n" style="left:1077px;top:797.0px;width:31px;color:#5533e6">23</div>
<div class="c" style="left:1109px;top:794px;width:33px;height:23px"></div>
<div class="c" style="left:1108px;top:794px;width:1px;height:23px;background:#4b1fe3"></div>
<div class="n" style="left:1109px;top:797.0px;width:33px;color:#5533e6">24</div>
<div class="c" style="left:1143px;top:794px;width:31px;height:23px"></div>
<div class="c" style="left:1142px;top:794px;width:1px;height:23px;background:#4b1fe3"></div>
<div class="n" style="left:1143px;top:797.0px;width:31px;color:#5533e6">25</div>
<div class="c" style="left:1175px;top:794px;width:33px;height:23px"></div>
<div class="c" style="left:1174px;top:794px;width:1px;height:23px;background:#4b1fe3"></div>
<div class="n" style="left:1175px;top:797.0px;width:33px;color:#5533e6">26</div>
<div class="c" style="left:1209px;top:794px;width:34px;height:23px"></div>
<div class="c" style="left:1208px;top:794px;width:1px;height:23px;background:#4b1fe3"></div>
<div class="n" style="left:1209px;top:797.0px;width:34px;color:#5533e6">27</div>
<div class="c" style="left:1244px;top:794px;width:26px;height:23px"></div>
<div class="n" style="left:1244px;top:797.0px;width:26px;color:#2fbb72">28</div>
<div class="c" style="left:1271px;top:794px;width:25px;height:23px"></div>
<div class="n" style="left:1271px;top:797.0px;width:25px;color:#2fbb72">29</div>
<div class="c" style="left:1297px;top:794px;width:25px;height:23px"></div>
<div class="n" style="left:1297px;top:797.0px;width:25px;color:#2fbb72">30</div>
<div class="c" style="left:1323px;top:794px;width:25px;height:23px"></div>
<div class="n" style="left:1323px;top:797.0px;width:25px;color:#2fbb72">31</div>
<div class="t" style="left:367.30px;top:817.81px;font-size:17px;font-family:'Liberation Sans',sans-serif;color:rgba(255,255,255,0.72);letter-spacing:1.612px;">juin</div>
<div class="c" style="left:412px;top:818px;width:20px;height:42px"></div>
<div class="n" style="left:412px;top:821.0px;width:20px;color:#2fbb72">1</div>
<div class="c" style="left:433px;top:818px;width:21px;height:42px"></div>
<div class="n" style="left:433px;top:821.0px;width:21px;color:#2fbb72">2</div>
<div class="c" style="left:455px;top:818px;width:20px;height:42px"></div>
<div class="n" style="left:455px;top:821.0px;width:20px;color:#2fbb72">3</div>
<div class="c" style="left:476px;top:818px;width:21px;height:42px"></div>
<div class="n" style="left:476px;top:821.0px;width:21px;color:#2fbb72">4</div>
<div class="c" style="left:498px;top:818px;width:20px;height:42px"></div>
<div class="n" style="left:498px;top:821.0px;width:20px;color:#2fbb72">5</div>
<div class="c" style="left:519px;top:818px;width:21px;height:42px"></div>
<div class="n" style="left:519px;top:821.0px;width:21px;color:#2fbb72">6</div>
<div class="c" style="left:541px;top:818px;width:20px;height:42px"></div>
<div class="n" style="left:541px;top:821.0px;width:20px;color:#2fbb72">7</div>
<div class="c" style="left:562px;top:818px;width:21px;height:42px"></div>
<div class="n" style="left:562px;top:821.0px;width:21px;color:#2fbb72">8</div>
<div class="c" style="left:584px;top:818px;width:21px;height:42px"></div>
<div class="n" style="left:584px;top:821.0px;width:21px;color:#2fbb72">9</div>
<div class="c" style="left:606px;top:818px;width:26px;height:42px"></div>
<div class="n" style="left:606px;top:821.0px;width:26px;color:#2fbb72">10</div>
<div class="c" style="left:633px;top:818px;width:26px;height:42px"></div>
<div class="n" style="left:633px;top:821.0px;width:26px;color:#2fbb72">11</div>
<div class="c" style="left:660px;top:818px;width:27px;height:42px"></div>
<div class="n" style="left:660px;top:821.0px;width:27px;color:#2fbb72">12</div>
<div class="c" style="left:688px;top:818px;width:27px;height:42px"></div>
<div class="n" style="left:688px;top:821.0px;width:27px;color:#2fbb72">13</div>
<div class="c" style="left:716px;top:818px;width:26px;height:42px"></div>
<div class="n" style="left:716px;top:821.0px;width:26px;color:#2fbb72">14</div>
<div class="c" style="left:743px;top:818px;width:27px;height:42px"></div>
<div class="n" style="left:743px;top:821.0px;width:27px;color:#2fbb72">15</div>
<div class="c" style="left:771px;top:818px;width:26px;height:42px"></div>
<div class="n" style="left:771px;top:821.0px;width:26px;color:#2fbb72">16</div>
<div class="c" style="left:798px;top:818px;width:26px;height:42px"></div>
<div class="n" style="left:798px;top:821.0px;width:26px;color:#2fbb72">17</div>
<div class="c" style="left:825px;top:818px;width:27px;height:42px"></div>
<div class="n" style="left:825px;top:821.0px;width:27px;color:#2fbb72">18</div>
<div class="c" style="left:853px;top:818px;width:26px;height:42px"></div>
<div class="n" style="left:853px;top:821.0px;width:26px;color:#2fbb72">19</div>
<div class="c" style="left:880px;top:818px;width:27px;height:42px"></div>
<div class="n" style="left:880px;top:821.0px;width:27px;color:#2fbb72">20</div>
<div class="c" style="left:908px;top:818px;width:26px;height:42px"></div>
<div class="n" style="left:908px;top:821.0px;width:26px;color:#2fbb72">21</div>
<div class="c" style="left:935px;top:818px;width:27px;height:42px"></div>
<div class="n" style="left:935px;top:821.0px;width:27px;color:#2fbb72">22</div>
<div class="c" style="left:963px;top:818px;width:26px;height:42px"></div>
<div class="n" style="left:963px;top:821.0px;width:26px;color:#2fbb72">23</div>
<div class="c" style="left:990px;top:818px;width:26px;height:42px"></div>
<div class="n" style="left:990px;top:821.0px;width:26px;color:#2fbb72">24</div>
<div class="c" style="left:1017px;top:818px;width:27px;height:42px"></div>
<div class="n" style="left:1017px;top:821.0px;width:27px;color:#2fbb72">25</div>
<div class="c" style="left:1045px;top:818px;width:27px;height:42px"></div>
<div class="n" style="left:1045px;top:821.0px;width:27px;color:#2fbb72">26</div>
<div class="c" style="left:1073px;top:818px;width:27px;height:42px"></div>
<div class="n" style="left:1073px;top:821.0px;width:27px;color:#2fbb72">27</div>
<div style="position:absolute;left:1101px;top:818px;width:166px;height:42px;background:#4b1fe3;"></div>
<div class="c" style="left:1268px;top:818px;width:25px;height:42px"></div>
<div class="n" style="left:1268px;top:821.0px;width:25px;color:#2fbb72">29</div>
<div class="c" style="left:1294px;top:818px;width:28px;height:42px"></div>
<div class="n" style="left:1294px;top:821.0px;width:28px;color:#2fbb72">30</div>
<div class="c" style="left:1323px;top:818px;width:25px;height:42px"></div>
<div class="n" style="left:1323px;top:821.0px;width:25px;color:#2fbb72">31</div>
<div class="t" style="left:1163.20px;top:820.82px;font-size:12.5px;font-family:'Liberation Sans',sans-serif;color:#d4ccff;letter-spacing:0.794px;">28 juin</div>
<div class="t" style="left:1119.00px;top:838.63px;font-size:16.5px;font-family:'Liberation Sans',sans-serif;color:#f0edff;letter-spacing:1.889px;">Design parade</div>
<div class="t" style="left:370.00px;top:861.31px;font-size:17px;font-family:'Liberation Sans',sans-serif;color:rgba(255,255,255,0.72);letter-spacing:1.376px;">juillet</div>
<div class="c" style="left:433px;top:861px;width:23px;height:23px"></div>
<div class="n" style="left:433px;top:864.0px;width:23px;color:#2fbb72">1</div>
<div class="c" style="left:457px;top:861px;width:25px;height:23px"></div>
<div class="n" style="left:457px;top:864.0px;width:25px;color:#2fbb72">2</div>
<div class="c" style="left:483px;top:861px;width:24px;height:23px"></div>
<div class="n" style="left:483px;top:864.0px;width:24px;color:#2fbb72">3</div>
<div class="c" style="left:508px;top:861px;width:25px;height:23px"></div>
<div class="n" style="left:508px;top:864.0px;width:25px;color:#2fbb72">4</div>
<div class="c" style="left:534px;top:861px;width:24px;height:23px"></div>
<div class="n" style="left:534px;top:864.0px;width:24px;color:#2fbb72">5</div>
<div class="c" style="left:559px;top:861px;width:24px;height:23px"></div>
<div class="n" style="left:559px;top:864.0px;width:24px;color:#2fbb72">6</div>
<div class="c" style="left:584px;top:861px;width:24px;height:23px"></div>
<div class="n" style="left:584px;top:864.0px;width:24px;color:#2fbb72">7</div>
<div class="c" style="left:609px;top:861px;width:25px;height:23px"></div>
<div class="n" style="left:609px;top:864.0px;width:25px;color:#2fbb72">8</div>
<div class="c" style="left:635px;top:861px;width:25px;height:23px"></div>
<div class="n" style="left:635px;top:864.0px;width:25px;color:#2fbb72">9</div>
<div class="c" style="left:661px;top:861px;width:30px;height:23px"></div>
<div class="n" style="left:661px;top:864.0px;width:30px;color:#2fbb72">10</div>
<div class="c" style="left:692px;top:861px;width:30px;height:23px"></div>
<div class="n" style="left:692px;top:864.0px;width:30px;color:#2fbb72">11</div>
<div class="c" style="left:723px;top:861px;width:30px;height:23px"></div>
<div class="n" style="left:723px;top:864.0px;width:30px;color:#2fbb72">12</div>
<div class="c" style="left:754px;top:861px;width:31px;height:23px"></div>
<div class="n" style="left:754px;top:864.0px;width:31px;color:#2fbb72">13</div>
<div class="c" style="left:786px;top:861px;width:31px;height:23px"></div>
<div class="n" style="left:786px;top:864.0px;width:31px;color:#2fbb72">14</div>
<div class="c" style="left:818px;top:861px;width:30px;height:23px"></div>
<div class="n" style="left:818px;top:864.0px;width:30px;color:#2fbb72">15</div>
<div class="c" style="left:849px;top:861px;width:30px;height:23px"></div>
<div class="n" style="left:849px;top:864.0px;width:30px;color:#2fbb72">16</div>
<div class="c" style="left:880px;top:861px;width:30px;height:23px"></div>
<div class="n" style="left:880px;top:864.0px;width:30px;color:#2fbb72">17</div>
<div class="c" style="left:911px;top:861px;width:31px;height:23px"></div>
<div class="n" style="left:911px;top:864.0px;width:31px;color:#2fbb72">18</div>
<div class="c" style="left:943px;top:861px;width:30px;height:23px"></div>
<div class="n" style="left:943px;top:864.0px;width:30px;color:#2fbb72">19</div>
<div class="c" style="left:974px;top:861px;width:31px;height:23px"></div>
<div class="n" style="left:974px;top:864.0px;width:31px;color:#2fbb72">20</div>
<div class="c" style="left:1006px;top:861px;width:30px;height:23px"></div>
<div class="n" style="left:1006px;top:864.0px;width:30px;color:#2fbb72">21</div>
<div class="c" style="left:1037px;top:861px;width:30px;height:23px"></div>
<div class="n" style="left:1037px;top:864.0px;width:30px;color:#2fbb72">22</div>
<div class="c" style="left:1068px;top:861px;width:30px;height:23px"></div>
<div class="n" style="left:1068px;top:864.0px;width:30px;color:#2fbb72">23</div>
<div class="c" style="left:1099px;top:861px;width:30px;height:23px"></div>
<div class="n" style="left:1099px;top:864.0px;width:30px;color:#2fbb72">24</div>
<div class="c" style="left:1130px;top:861px;width:31px;height:23px"></div>
<div class="n" style="left:1130px;top:864.0px;width:31px;color:#2fbb72">25</div>
<div class="c" style="left:1162px;top:861px;width:30px;height:23px"></div>
<div class="n" style="left:1162px;top:864.0px;width:30px;color:#2fbb72">26</div>
<div class="c" style="left:1193px;top:861px;width:31px;height:23px"></div>
<div class="n" style="left:1193px;top:864.0px;width:31px;color:#2fbb72">27</div>
<div class="c" style="left:1225px;top:861px;width:30px;height:23px"></div>
<div class="n" style="left:1225px;top:864.0px;width:30px;color:#2fbb72">28</div>
<div class="c" style="left:1256px;top:861px;width:30px;height:23px"></div>
<div class="n" style="left:1256px;top:864.0px;width:30px;color:#2fbb72">29</div>
<div class="c" style="left:1287px;top:861px;width:30px;height:23px"></div>
<div class="n" style="left:1287px;top:864.0px;width:30px;color:#2fbb72">30</div>
<div class="c" style="left:1318px;top:861px;width:30px;height:23px"></div>
<div class="n" style="left:1318px;top:864.0px;width:30px;color:#2fbb72">31</div>
<div class="t" style="left:369.50px;top:885.51px;font-size:17px;font-family:'Liberation Sans',sans-serif;color:rgba(255,255,255,0.72);letter-spacing:1.637px;">aout</div>
<div class="c" style="left:424px;top:885px;width:24px;height:23px"></div>
<div class="n" style="left:424px;top:888.0px;width:24px;color:#2fbb72">1</div>
<div class="c" style="left:449px;top:885px;width:26px;height:23px"></div>
<div class="n" style="left:449px;top:888.0px;width:26px;color:#2fbb72">2</div>
<div class="c" style="left:476px;top:885px;width:24px;height:23px"></div>
<div class="n" style="left:476px;top:888.0px;width:24px;color:#2fbb72">3</div>
<div class="c" style="left:501px;top:885px;width:24px;height:23px"></div>
<div class="n" style="left:501px;top:888.0px;width:24px;color:#2fbb72">4</div>
<div class="c" style="left:526px;top:885px;width:25px;height:23px"></div>
<div class="n" style="left:526px;top:888.0px;width:25px;color:#2fbb72">5</div>
<div class="c" style="left:552px;top:885px;width:24px;height:23px"></div>
<div class="n" style="left:552px;top:888.0px;width:24px;color:#2fbb72">6</div>
<div class="c" style="left:577px;top:885px;width:25px;height:23px"></div>
<div class="n" style="left:577px;top:888.0px;width:25px;color:#2fbb72">7</div>
<div class="c" style="left:603px;top:885px;width:25px;height:23px"></div>
<div class="n" style="left:603px;top:888.0px;width:25px;color:#2fbb72">8</div>
<div class="c" style="left:629px;top:885px;width:25px;height:23px"></div>
<div class="n" style="left:629px;top:888.0px;width:25px;color:#2fbb72">9</div>
<div class="c" style="left:655px;top:885px;width:29px;height:23px"></div>
<div class="n" style="left:655px;top:888.0px;width:29px;color:#2fbb72">10</div>
<div class="c" style="left:685px;top:885px;width:31px;height:23px"></div>
<div class="n" style="left:685px;top:888.0px;width:31px;color:#2fbb72">11</div>
<div class="c" style="left:717px;top:885px;width:31px;height:23px"></div>
<div class="n" style="left:717px;top:888.0px;width:31px;color:#2fbb72">12</div>
<div class="c" style="left:749px;top:885px;width:31px;height:23px"></div>
<div class="n" style="left:749px;top:888.0px;width:31px;color:#2fbb72">13</div>
<div class="c" style="left:781px;top:885px;width:30px;height:23px"></div>
<div class="n" style="left:781px;top:888.0px;width:30px;color:#2fbb72">14</div>
<div class="c" style="left:812px;top:885px;width:31px;height:23px"></div>
<div class="n" style="left:812px;top:888.0px;width:31px;color:#2fbb72">15</div>
<div class="c" style="left:844px;top:885px;width:31px;height:23px"></div>
<div class="n" style="left:844px;top:888.0px;width:31px;color:#2fbb72">16</div>
<div class="c" style="left:876px;top:885px;width:31px;height:23px"></div>
<div class="n" style="left:876px;top:888.0px;width:31px;color:#2fbb72">17</div>
<div class="c" style="left:908px;top:885px;width:30px;height:23px"></div>
<div class="n" style="left:908px;top:888.0px;width:30px;color:#2fbb72">18</div>
<div class="c" style="left:939px;top:885px;width:30px;height:23px"></div>
<div class="n" style="left:939px;top:888.0px;width:30px;color:#2fbb72">19</div>
<div class="c" style="left:970px;top:885px;width:31px;height:23px"></div>
<div class="n" style="left:970px;top:888.0px;width:31px;color:#2fbb72">20</div>
<div class="c" style="left:1002px;top:885px;width:30px;height:23px"></div>
<div class="n" style="left:1002px;top:888.0px;width:30px;color:#2fbb72">21</div>
<div class="c" style="left:1033px;top:885px;width:31px;height:23px"></div>
<div class="n" style="left:1033px;top:888.0px;width:31px;color:#2fbb72">22</div>
<div class="c" style="left:1065px;top:885px;width:31px;height:23px"></div>
<div class="n" style="left:1065px;top:888.0px;width:31px;color:#2fbb72">23</div>
<div class="c" style="left:1097px;top:885px;width:30px;height:23px"></div>
<div class="n" style="left:1097px;top:888.0px;width:30px;color:#2fbb72">24</div>
<div class="c" style="left:1128px;top:885px;width:30px;height:23px"></div>
<div class="n" style="left:1128px;top:888.0px;width:30px;color:#2fbb72">25</div>
<div class="c" style="left:1159px;top:885px;width:31px;height:23px"></div>
<div class="n" style="left:1159px;top:888.0px;width:31px;color:#2fbb72">26</div>
<div class="c" style="left:1191px;top:885px;width:31px;height:23px"></div>
<div class="n" style="left:1191px;top:888.0px;width:31px;color:#2fbb72">27</div>
<div class="c" style="left:1223px;top:885px;width:31px;height:23px"></div>
<div class="n" style="left:1223px;top:888.0px;width:31px;color:#2fbb72">28</div>
<div class="c" style="left:1255px;top:885px;width:30px;height:23px"></div>
<div class="n" style="left:1255px;top:888.0px;width:30px;color:#2fbb72">29</div>
<div class="c" style="left:1286px;top:885px;width:30px;height:23px"></div>
<div class="n" style="left:1286px;top:888.0px;width:30px;color:#2fbb72">30</div>
<div class="c" style="left:1317px;top:885px;width:31px;height:23px"></div>
<div class="n" style="left:1317px;top:888.0px;width:31px;color:#2fbb72">31</div>
<div class="t" style="left:366.60px;top:909.61px;font-size:17px;font-family:'Liberation Sans',sans-serif;color:rgba(255,255,255,0.72);letter-spacing:1.335px;">septembre</div>
<div class="c" style="left:467px;top:909px;width:24px;height:23px"></div>
<div class="c" style="left:466px;top:909px;width:1px;height:23px;background:#f15d24"></div>
<div class="n" style="left:467px;top:912.0px;width:24px;color:#f26a36">1</div>
<div class="c" style="left:492px;top:909px;width:23px;height:23px"></div>
<div class="c" style="left:491px;top:909px;width:1px;height:23px;background:#f15d24"></div>
<div class="n" style="left:492px;top:912.0px;width:23px;color:#f26a36">2</div>
<div class="c" style="left:516px;top:909px;width:23px;height:23px"></div>
<div class="c" style="left:515px;top:909px;width:1px;height:23px;background:#f15d24"></div>
<div class="n" style="left:516px;top:912.0px;width:23px;color:#f26a36">3</div>
<div class="c" style="left:540px;top:909px;width:24px;height:23px"></div>
<div class="c" style="left:539px;top:909px;width:1px;height:23px;background:#f15d24"></div>
<div class="n" style="left:540px;top:912.0px;width:24px;color:#f26a36">4</div>
<div class="c" style="left:565px;top:909px;width:23px;height:23px"></div>
<div class="c" style="left:564px;top:909px;width:1px;height:23px;background:#f15d24"></div>
<div class="n" style="left:565px;top:912.0px;width:23px;color:#f26a36">5</div>
<div class="c" style="left:589px;top:909px;width:23px;height:23px"></div>
<div class="c" style="left:588px;top:909px;width:1px;height:23px;background:#f15d24"></div>
<div class="n" style="left:589px;top:912.0px;width:23px;color:#f26a36">6</div>
<div class="c" style="left:613px;top:909px;width:23px;height:23px"></div>
<div class="c" style="left:612px;top:909px;width:1px;height:23px;background:#f15d24"></div>
<div class="n" style="left:613px;top:912.0px;width:23px;color:#f26a36">7</div>
<div class="c" style="left:637px;top:909px;width:25px;height:23px"></div>
<div class="c" style="left:636px;top:909px;width:1px;height:23px;background:#f15d24"></div>
<div class="n" style="left:637px;top:912.0px;width:25px;color:#f26a36">8</div>
<div class="c" style="left:663px;top:909px;width:23px;height:23px"></div>
<div class="c" style="left:662px;top:909px;width:1px;height:23px;background:#f15d24"></div>
<div class="n" style="left:663px;top:912.0px;width:23px;color:#f26a36">9</div>
<div class="c" style="left:687px;top:909px;width:28px;height:23px"></div>
<div class="c" style="left:686px;top:909px;width:1px;height:23px;background:#f15d24"></div>
<div class="n" style="left:687px;top:912.0px;width:28px;color:#f26a36">10</div>
<div class="c" style="left:716px;top:909px;width:30px;height:23px"></div>
<div class="c" style="left:715px;top:909px;width:1px;height:23px;background:#f15d24"></div>
<div class="n" style="left:716px;top:912.0px;width:30px;color:#f26a36">11</div>
<div class="c" style="left:747px;top:909px;width:29px;height:23px"></div>
<div class="c" style="left:746px;top:909px;width:1px;height:23px;background:#f15d24"></div>
<div class="n" style="left:747px;top:912.0px;width:29px;color:#f26a36">12</div>
<div class="c" style="left:777px;top:909px;width:30px;height:23px"></div>
<div class="c" style="left:776px;top:909px;width:1px;height:23px;background:#f15d24"></div>
<div class="n" style="left:777px;top:912.0px;width:30px;color:#f26a36">13</div>
<div class="c" style="left:808px;top:909px;width:29px;height:23px"></div>
<div class="c" style="left:807px;top:909px;width:1px;height:23px;background:#f15d24"></div>
<div class="n" style="left:808px;top:912.0px;width:29px;color:#f26a36">14</div>
<div class="c" style="left:838px;top:909px;width:29px;height:23px"></div>
<div class="c" style="left:837px;top:909px;width:1px;height:23px;background:#f15d24"></div>
<div class="n" style="left:838px;top:912.0px;width:29px;color:#f26a36">15</div>
<div class="c" style="left:868px;top:909px;width:29px;height:23px"></div>
<div class="c" style="left:867px;top:909px;width:1px;height:23px;background:#f15d24"></div>
<div class="n" style="left:868px;top:912.0px;width:29px;color:#f26a36">16</div>
<div class="c" style="left:898px;top:909px;width:30px;height:23px"></div>
<div class="c" style="left:897px;top:909px;width:1px;height:23px;background:#f15d24"></div>
<div class="n" style="left:898px;top:912.0px;width:30px;color:#f26a36">17</div>
<div class="c" style="left:929px;top:909px;width:29px;height:23px"></div>
<div class="c" style="left:928px;top:909px;width:1px;height:23px;background:#f15d24"></div>
<div class="n" style="left:929px;top:912.0px;width:29px;color:#f26a36">18</div>
<div class="c" style="left:959px;top:909px;width:29px;height:23px"></div>
<div class="c" style="left:958px;top:909px;width:1px;height:23px;background:#f15d24"></div>
<div class="n" style="left:959px;top:912.0px;width:29px;color:#f26a36">19</div>
<div class="c" style="left:989px;top:909px;width:30px;height:23px"></div>
<div class="c" style="left:988px;top:909px;width:1px;height:23px;background:#f15d24"></div>
<div class="n" style="left:989px;top:912.0px;width:30px;color:#f26a36">20</div>
<div class="c" style="left:1020px;top:909px;width:29px;height:23px"></div>
<div class="c" style="left:1019px;top:909px;width:1px;height:23px;background:#f15d24"></div>
<div class="n" style="left:1020px;top:912.0px;width:29px;color:#f26a36">21</div>
<div class="c" style="left:1050px;top:909px;width:30px;height:23px"></div>
<div class="c" style="left:1049px;top:909px;width:1px;height:23px;background:#f15d24"></div>
<div class="n" style="left:1050px;top:912.0px;width:30px;color:#f26a36">22</div>
<div class="c" style="left:1081px;top:909px;width:29px;height:23px"></div>
<div class="c" style="left:1080px;top:909px;width:1px;height:23px;background:#f15d24"></div>
<div class="n" style="left:1081px;top:912.0px;width:29px;color:#f26a36">23</div>
<div class="c" style="left:1111px;top:909px;width:29px;height:23px"></div>
<div class="c" style="left:1110px;top:909px;width:1px;height:23px;background:#f15d24"></div>
<div class="n" style="left:1111px;top:912.0px;width:29px;color:#f26a36">24</div>
<div class="c" style="left:1141px;top:909px;width:29px;height:23px"></div>
<div class="c" style="left:1140px;top:909px;width:1px;height:23px;background:#f15d24"></div>
<div class="n" style="left:1141px;top:912.0px;width:29px;color:#f26a36">25</div>
<div class="c" style="left:1171px;top:909px;width:30px;height:23px"></div>
<div class="c" style="left:1170px;top:909px;width:1px;height:23px;background:#f15d24"></div>
<div class="n" style="left:1171px;top:912.0px;width:30px;color:#f26a36">26</div>
<div class="c" style="left:1202px;top:909px;width:29px;height:23px"></div>
<div class="c" style="left:1201px;top:909px;width:1px;height:23px;background:#f15d24"></div>
<div class="n" style="left:1202px;top:912.0px;width:29px;color:#f26a36">27</div>
<div class="c" style="left:1232px;top:909px;width:30px;height:23px"></div>
<div class="c" style="left:1231px;top:909px;width:1px;height:23px;background:#f15d24"></div>
<div class="n" style="left:1232px;top:912.0px;width:30px;color:#f26a36">28</div>
<div class="c" style="left:1263px;top:909px;width:28px;height:23px"></div>
<div class="c" style="left:1262px;top:909px;width:1px;height:23px;background:#f15d24"></div>
<div class="n" style="left:1263px;top:912.0px;width:28px;color:#f26a36">29</div>
<div class="c" style="left:1292px;top:909px;width:31px;height:23px"></div>
<div class="c" style="left:1291px;top:909px;width:1px;height:23px;background:#f15d24"></div>
<div class="n" style="left:1292px;top:912.0px;width:31px;color:#f26a36">30</div>
<div class="c" style="left:1324px;top:909px;width:24px;height:23px"></div>
<div class="n" style="left:1324px;top:912.0px;width:24px;color:#2fbb72">31</div>
<div class="t" style="left:365.90px;top:933.31px;font-size:17px;font-family:'Liberation Sans',sans-serif;color:rgba(255,255,255,0.72);letter-spacing:1.549px;">octobre</div>
<div class="c" style="left:442px;top:933px;width:15px;height:42px"></div>
<div class="n" style="left:442px;top:936.0px;width:15px;color:#2fbb72">1</div>
<div class="c" style="left:458px;top:933px;width:16px;height:42px"></div>
<div class="n" style="left:458px;top:936.0px;width:16px;color:#2fbb72">2</div>
<div class="c" style="left:475px;top:933px;width:17px;height:42px"></div>
<div class="n" style="left:475px;top:936.0px;width:17px;color:#2fbb72">3</div>
<div class="c" style="left:493px;top:933px;width:15px;height:42px"></div>
<div class="n" style="left:493px;top:936.0px;width:15px;color:#2fbb72">4</div>
<div class="c" style="left:509px;top:933px;width:16px;height:42px"></div>
<div class="n" style="left:509px;top:936.0px;width:16px;color:#2fbb72">5</div>
<div class="c" style="left:526px;top:933px;width:17px;height:42px"></div>
<div class="n" style="left:526px;top:936.0px;width:17px;color:#2fbb72">6</div>
<div class="c" style="left:544px;top:933px;width:16px;height:42px"></div>
<div class="n" style="left:544px;top:936.0px;width:16px;color:#2fbb72">7</div>
<div class="c" style="left:561px;top:933px;width:15px;height:42px"></div>
<div class="n" style="left:561px;top:936.0px;width:15px;color:#2fbb72">8</div>
<div class="c" style="left:577px;top:933px;width:17px;height:42px"></div>
<div class="n" style="left:577px;top:936.0px;width:17px;color:#2fbb72">9</div>
<div class="c" style="left:595px;top:933px;width:20px;height:42px"></div>
<div class="n" style="left:595px;top:936.0px;width:20px;color:#2fbb72">10</div>
<div class="c" style="left:616px;top:933px;width:22px;height:42px"></div>
<div class="n" style="left:616px;top:936.0px;width:22px;color:#2fbb72">11</div>
<div class="c" style="left:639px;top:933px;width:23px;height:42px"></div>
<div class="n" style="left:639px;top:936.0px;width:23px;color:#2fbb72">12</div>
<div style="position:absolute;left:663px;top:933px;width:272px;height:42px;background:#4b1fe3;"></div>
<div class="c" style="left:936px;top:933px;width:22px;height:42px"></div>
<div class="n" style="left:936px;top:936.0px;width:22px;color:#2fbb72">14</div>
<div class="c" style="left:959px;top:933px;width:22px;height:42px"></div>
<div class="n" style="left:959px;top:936.0px;width:22px;color:#2fbb72">15</div>
<div class="c" style="left:982px;top:933px;width:23px;height:42px"></div>
<div class="n" style="left:982px;top:936.0px;width:23px;color:#2fbb72">16</div>
<div class="c" style="left:1006px;top:933px;width:21px;height:42px"></div>
<div class="n" style="left:1006px;top:936.0px;width:21px;color:#2fbb72">17</div>
<div class="c" style="left:1028px;top:933px;width:22px;height:42px"></div>
<div class="n" style="left:1028px;top:936.0px;width:22px;color:#2fbb72">18</div>
<div class="c" style="left:1051px;top:933px;width:21px;height:42px"></div>
<div class="n" style="left:1051px;top:936.0px;width:21px;color:#2fbb72">19</div>
<div class="c" style="left:1073px;top:933px;width:23px;height:42px"></div>
<div class="n" style="left:1073px;top:936.0px;width:23px;color:#2fbb72">20</div>
<div class="c" style="left:1097px;top:933px;width:21px;height:42px"></div>
<div class="n" style="left:1097px;top:936.0px;width:21px;color:#2fbb72">21</div>
<div class="c" style="left:1119px;top:933px;width:22px;height:42px"></div>
<div class="n" style="left:1119px;top:936.0px;width:22px;color:#2fbb72">22</div>
<div class="c" style="left:1142px;top:933px;width:22px;height:42px"></div>
<div class="n" style="left:1142px;top:936.0px;width:22px;color:#2fbb72">23</div>
<div class="c" style="left:1165px;top:933px;width:22px;height:42px"></div>
<div class="n" style="left:1165px;top:936.0px;width:22px;color:#2fbb72">24</div>
<div class="c" style="left:1188px;top:933px;width:23px;height:42px"></div>
<div class="n" style="left:1188px;top:936.0px;width:23px;color:#2fbb72">25</div>
<div class="c" style="left:1212px;top:933px;width:21px;height:42px"></div>
<div class="n" style="left:1212px;top:936.0px;width:21px;color:#2fbb72">26</div>
<div class="c" style="left:1234px;top:933px;width:22px;height:42px"></div>
<div class="n" style="left:1234px;top:936.0px;width:22px;color:#2fbb72">27</div>
<div class="c" style="left:1257px;top:933px;width:23px;height:42px"></div>
<div class="n" style="left:1257px;top:936.0px;width:23px;color:#2fbb72">28</div>
<div class="c" style="left:1281px;top:933px;width:21px;height:42px"></div>
<div class="n" style="left:1281px;top:936.0px;width:21px;color:#2fbb72">29</div>
<div class="c" style="left:1303px;top:933px;width:22px;height:42px"></div>
<div class="n" style="left:1303px;top:936.0px;width:22px;color:#2fbb72">30</div>
<div class="c" style="left:1326px;top:933px;width:22px;height:42px"></div>
<div class="n" style="left:1326px;top:936.0px;width:22px;color:#2fbb72">31</div>
<div class="t" style="left:766.15px;top:935.82px;font-size:12.5px;font-family:'Liberation Sans',sans-serif;color:#d4ccff;letter-spacing:0.737px;">13 octobre</div>
<div class="t" style="left:674.00px;top:953.63px;font-size:16.5px;font-family:'Liberation Sans',sans-serif;color:#f0edff;letter-spacing:2.074px;">exposition de photographie</div>
<div class="t" style="left:369.00px;top:976.11px;font-size:17px;font-family:'Liberation Sans',sans-serif;color:rgba(255,255,255,0.72);letter-spacing:1.200px;">novembre</div>
<div class="c" style="left:467px;top:976px;width:23px;height:23px"></div>
<div class="n" style="left:467px;top:979.0px;width:23px;color:#2fbb72">1</div>
<div class="c" style="left:491px;top:976px;width:23px;height:23px"></div>
<div class="n" style="left:491px;top:979.0px;width:23px;color:#2fbb72">2</div>
<div class="c" style="left:515px;top:976px;width:24px;height:23px"></div>
<div class="n" style="left:515px;top:979.0px;width:24px;color:#2fbb72">3</div>
<div class="c" style="left:540px;top:976px;width:23px;height:23px"></div>
<div class="n" style="left:540px;top:979.0px;width:23px;color:#2fbb72">4</div>
<div class="c" style="left:564px;top:976px;width:23px;height:23px"></div>
<div class="n" style="left:564px;top:979.0px;width:23px;color:#2fbb72">5</div>
<div class="c" style="left:588px;top:976px;width:23px;height:23px"></div>
<div class="n" style="left:588px;top:979.0px;width:23px;color:#2fbb72">6</div>
<div class="c" style="left:612px;top:976px;width:23px;height:23px"></div>
<div class="n" style="left:612px;top:979.0px;width:23px;color:#2fbb72">7</div>
<div class="c" style="left:636px;top:976px;width:24px;height:23px"></div>
<div class="n" style="left:636px;top:979.0px;width:24px;color:#2fbb72">8</div>
<div class="c" style="left:661px;top:976px;width:23px;height:23px"></div>
<div class="n" style="left:661px;top:979.0px;width:23px;color:#2fbb72">9</div>
<div class="c" style="left:685px;top:976px;width:29px;height:23px"></div>
<div class="n" style="left:685px;top:979.0px;width:29px;color:#2fbb72">10</div>
<div class="c" style="left:715px;top:976px;width:29px;height:23px"></div>
<div class="n" style="left:715px;top:979.0px;width:29px;color:#2fbb72">11</div>
<div class="c" style="left:745px;top:976px;width:29px;height:23px"></div>
<div class="n" style="left:745px;top:979.0px;width:29px;color:#2fbb72">12</div>
<div class="c" style="left:775px;top:976px;width:30px;height:23px"></div>
<div class="n" style="left:775px;top:979.0px;width:30px;color:#2fbb72">13</div>
<div class="c" style="left:806px;top:976px;width:29px;height:23px"></div>
<div class="n" style="left:806px;top:979.0px;width:29px;color:#2fbb72">14</div>
<div class="c" style="left:836px;top:976px;width:29px;height:23px"></div>
<div class="n" style="left:836px;top:979.0px;width:29px;color:#2fbb72">15</div>
<div class="c" style="left:866px;top:976px;width:29px;height:23px"></div>
<div class="n" style="left:866px;top:979.0px;width:29px;color:#2fbb72">16</div>
<div class="c" style="left:896px;top:976px;width:29px;height:23px"></div>
<div class="n" style="left:896px;top:979.0px;width:29px;color:#2fbb72">17</div>
<div class="c" style="left:926px;top:976px;width:30px;height:23px"></div>
<div class="n" style="left:926px;top:979.0px;width:30px;color:#2fbb72">18</div>
<div class="c" style="left:957px;top:976px;width:29px;height:23px"></div>
<div class="n" style="left:957px;top:979.0px;width:29px;color:#2fbb72">19</div>
<div class="c" style="left:987px;top:976px;width:28px;height:23px"></div>
<div class="n" style="left:987px;top:979.0px;width:28px;color:#2fbb72">20</div>
<div class="c" style="left:1016px;top:976px;width:30px;height:23px"></div>
<div class="n" style="left:1016px;top:979.0px;width:30px;color:#2fbb72">21</div>
<div class="c" style="left:1047px;top:976px;width:30px;height:23px"></div>
<div class="n" style="left:1047px;top:979.0px;width:30px;color:#2fbb72">22</div>
<div class="c" style="left:1078px;top:976px;width:29px;height:23px"></div>
<div class="n" style="left:1078px;top:979.0px;width:29px;color:#2fbb72">23</div>
<div class="c" style="left:1108px;top:976px;width:29px;height:23px"></div>
<div class="n" style="left:1108px;top:979.0px;width:29px;color:#2fbb72">24</div>
<div class="c" style="left:1138px;top:976px;width:29px;height:23px"></div>
<div class="n" style="left:1138px;top:979.0px;width:29px;color:#2fbb72">25</div>
<div class="c" style="left:1168px;top:976px;width:30px;height:23px"></div>
<div class="n" style="left:1168px;top:979.0px;width:30px;color:#2fbb72">26</div>
<div class="c" style="left:1199px;top:976px;width:29px;height:23px"></div>
<div class="n" style="left:1199px;top:979.0px;width:29px;color:#2fbb72">27</div>
<div class="c" style="left:1229px;top:976px;width:29px;height:23px"></div>
<div class="n" style="left:1229px;top:979.0px;width:29px;color:#2fbb72">28</div>
<div class="c" style="left:1259px;top:976px;width:30px;height:23px"></div>
<div class="n" style="left:1259px;top:979.0px;width:30px;color:#2fbb72">29</div>
<div class="c" style="left:1290px;top:976px;width:28px;height:23px"></div>
<div class="n" style="left:1290px;top:979.0px;width:28px;color:#2fbb72">30</div>
<div class="c" style="left:1319px;top:976px;width:29px;height:23px"></div>
<div class="n" style="left:1319px;top:979.0px;width:29px;color:#2fbb72">31</div>
<div class="t" style="left:366.60px;top:1000.61px;font-size:17px;font-family:'Liberation Sans',sans-serif;color:rgba(255,255,255,0.72);letter-spacing:1.200px;">décembre</div>
<div class="c" style="left:462px;top:1000px;width:17px;height:41px"></div>
<div class="n" style="left:462px;top:1003.0px;width:17px;color:#2fbb72">1</div>
<div class="c" style="left:480px;top:1000px;width:18px;height:41px"></div>
<div class="n" style="left:480px;top:1003.0px;width:18px;color:#2fbb72">2</div>
<div class="c" style="left:499px;top:1000px;width:17px;height:41px"></div>
<div class="n" style="left:499px;top:1003.0px;width:17px;color:#2fbb72">3</div>
<div class="c" style="left:517px;top:1000px;width:19px;height:41px"></div>
<div class="n" style="left:517px;top:1003.0px;width:19px;color:#2fbb72">4</div>
<div class="c" style="left:537px;top:1000px;width:17px;height:41px"></div>
<div class="n" style="left:537px;top:1003.0px;width:17px;color:#2fbb72">5</div>
<div class="c" style="left:555px;top:1000px;width:18px;height:41px"></div>
<div class="n" style="left:555px;top:1003.0px;width:18px;color:#2fbb72">6</div>
<div class="c" style="left:574px;top:1000px;width:18px;height:41px"></div>
<div class="n" style="left:574px;top:1003.0px;width:18px;color:#2fbb72">7</div>
<div class="c" style="left:593px;top:1000px;width:18px;height:41px"></div>
<div class="n" style="left:593px;top:1003.0px;width:18px;color:#2fbb72">8</div>
<div class="c" style="left:612px;top:1000px;width:18px;height:41px"></div>
<div class="n" style="left:612px;top:1003.0px;width:18px;color:#2fbb72">9</div>
<div class="c" style="left:631px;top:1000px;width:23px;height:41px"></div>
<div class="n" style="left:631px;top:1003.0px;width:23px;color:#2fbb72">10</div>
<div class="c" style="left:655px;top:1000px;width:24px;height:41px"></div>
<div class="n" style="left:655px;top:1003.0px;width:24px;color:#2fbb72">11</div>
<div class="c" style="left:680px;top:1000px;width:24px;height:41px"></div>
<div class="n" style="left:680px;top:1003.0px;width:24px;color:#2fbb72">12</div>
<div class="c" style="left:705px;top:1000px;width:24px;height:41px"></div>
<div class="n" style="left:705px;top:1003.0px;width:24px;color:#2fbb72">13</div>
<div class="c" style="left:730px;top:1000px;width:23px;height:41px"></div>
<div class="n" style="left:730px;top:1003.0px;width:23px;color:#2fbb72">14</div>
<div class="c" style="left:754px;top:1000px;width:24px;height:41px"></div>
<div class="n" style="left:754px;top:1003.0px;width:24px;color:#2fbb72">15</div>
<div class="c" style="left:779px;top:1000px;width:24px;height:41px"></div>
<div class="n" style="left:779px;top:1003.0px;width:24px;color:#2fbb72">16</div>
<div class="c" style="left:804px;top:1000px;width:24px;height:41px"></div>
<div class="n" style="left:804px;top:1003.0px;width:24px;color:#2fbb72">17</div>
<div class="c" style="left:829px;top:1000px;width:24px;height:41px"></div>
<div class="n" style="left:829px;top:1003.0px;width:24px;color:#2fbb72">18</div>
<div class="c" style="left:854px;top:1000px;width:24px;height:41px"></div>
<div class="n" style="left:854px;top:1003.0px;width:24px;color:#2fbb72">19</div>
<div style="position:absolute;left:879px;top:1000px;width:197px;height:41px;background:#4b1fe3;"></div>
<div class="c" style="left:1077px;top:1000px;width:24px;height:41px"></div>
<div class="n" style="left:1077px;top:1003.0px;width:24px;color:#2fbb72">21</div>
<div class="c" style="left:1102px;top:1000px;width:24px;height:41px"></div>
<div class="n" style="left:1102px;top:1003.0px;width:24px;color:#2fbb72">22</div>
<div class="c" style="left:1127px;top:1000px;width:23px;height:41px"></div>
<div class="n" style="left:1127px;top:1003.0px;width:23px;color:#2fbb72">23</div>
<div class="c" style="left:1151px;top:1000px;width:25px;height:41px"></div>
<div class="n" style="left:1151px;top:1003.0px;width:25px;color:#2fbb72">24</div>
<div class="c" style="left:1177px;top:1000px;width:23px;height:41px"></div>
<div class="n" style="left:1177px;top:1003.0px;width:23px;color:#2fbb72">25</div>
<div class="c" style="left:1201px;top:1000px;width:24px;height:41px"></div>
<div class="n" style="left:1201px;top:1003.0px;width:24px;color:#2fbb72">26</div>
<div class="c" style="left:1226px;top:1000px;width:24px;height:41px"></div>
<div class="n" style="left:1226px;top:1003.0px;width:24px;color:#2fbb72">27</div>
<div class="c" style="left:1251px;top:1000px;width:23px;height:41px"></div>
<div class="n" style="left:1251px;top:1003.0px;width:23px;color:#2fbb72">28</div>
<div class="c" style="left:1275px;top:1000px;width:24px;height:41px"></div>
<div class="n" style="left:1275px;top:1003.0px;width:24px;color:#2fbb72">29</div>
<div class="c" style="left:1300px;top:1000px;width:24px;height:41px"></div>
<div class="n" style="left:1300px;top:1003.0px;width:24px;color:#2fbb72">30</div>
<div class="c" style="left:1325px;top:1000px;width:23px;height:41px"></div>
<div class="n" style="left:1325px;top:1003.0px;width:23px;color:#2fbb72">31</div>
<div class="t" style="left:937.20px;top:1002.82px;font-size:12.5px;font-family:'Liberation Sans',sans-serif;color:#d4ccff;letter-spacing:0.764px;">20 décembre</div>
<div class="t" style="left:895.55px;top:1020.63px;font-size:16.5px;font-family:'Liberation Sans',sans-serif;color:#f0edff;letter-spacing:1.765px;">Festival Pitchouns</div>
<div style="position:absolute;left:436px;top:633px;width:366px;height:4px;background:#4b1fe3;"></div>
<div style="position:absolute;left:802px;top:614px;width:34px;height:19px;border-right:4px solid #4b1fe3;border-bottom:4px solid #4b1fe3;border-bottom-right-radius:22px;"></div>
<div style="position:absolute;left:841px;top:614px;width:34px;height:19px;border-right:4px solid #4b1fe3;border-bottom:4px solid #4b1fe3;border-bottom-right-radius:22px;"></div>
<div style="position:absolute;left:1009px;top:681px;width:29px;height:38px;border-right:4px solid #4b1fe3;border-bottom:4px solid #4b1fe3;border-bottom-right-radius:28px 36px;"></div>
<div style="position:absolute;left:1208px;top:789px;width:140px;height:4px;background:#4b1fe3;"></div>
<div style="position:absolute;left:409px;top:813px;width:799px;height:4px;background:#4b1fe3;"></div>
<div style="position:absolute;left:1208px;top:794px;width:31px;height:19px;border-right:4px solid #4b1fe3;border-bottom:4px solid #4b1fe3;border-bottom-right-radius:22px;"></div>
<div style="position:absolute;left:466px;top:930px;width:825px;height:2px;background:repeating-linear-gradient(to right,#f15d24 0 6px,transparent 6px 12px);"></div>
<div style="position:absolute;left:1291px;top:909px;width:30px;height:21px;border-right:2px dashed #f15d24;border-bottom:2px dashed #f15d24;border-bottom-right-radius:22px;"></div>
<div style="position:absolute;left:1348px;top:144px;width:9px;height:597px;background:#d4d4d4;"></div>
<div style="position:absolute;left:1349px;top:146px;width:7px;height:415px;background:#6e6e6e;"></div>
<div style="position:absolute;left:1356px;top:144px;width:1px;height:597px;background:#bdbdbd;"></div>
<div style="position:absolute;left:1357px;top:144px;width:9px;height:597px;background:#e4e4e4;"></div>
<div style="position:absolute;left:1358px;top:310px;width:7px;height:125px;background:#8c8c8c;border-radius:1px;"></div>
</body></html>
